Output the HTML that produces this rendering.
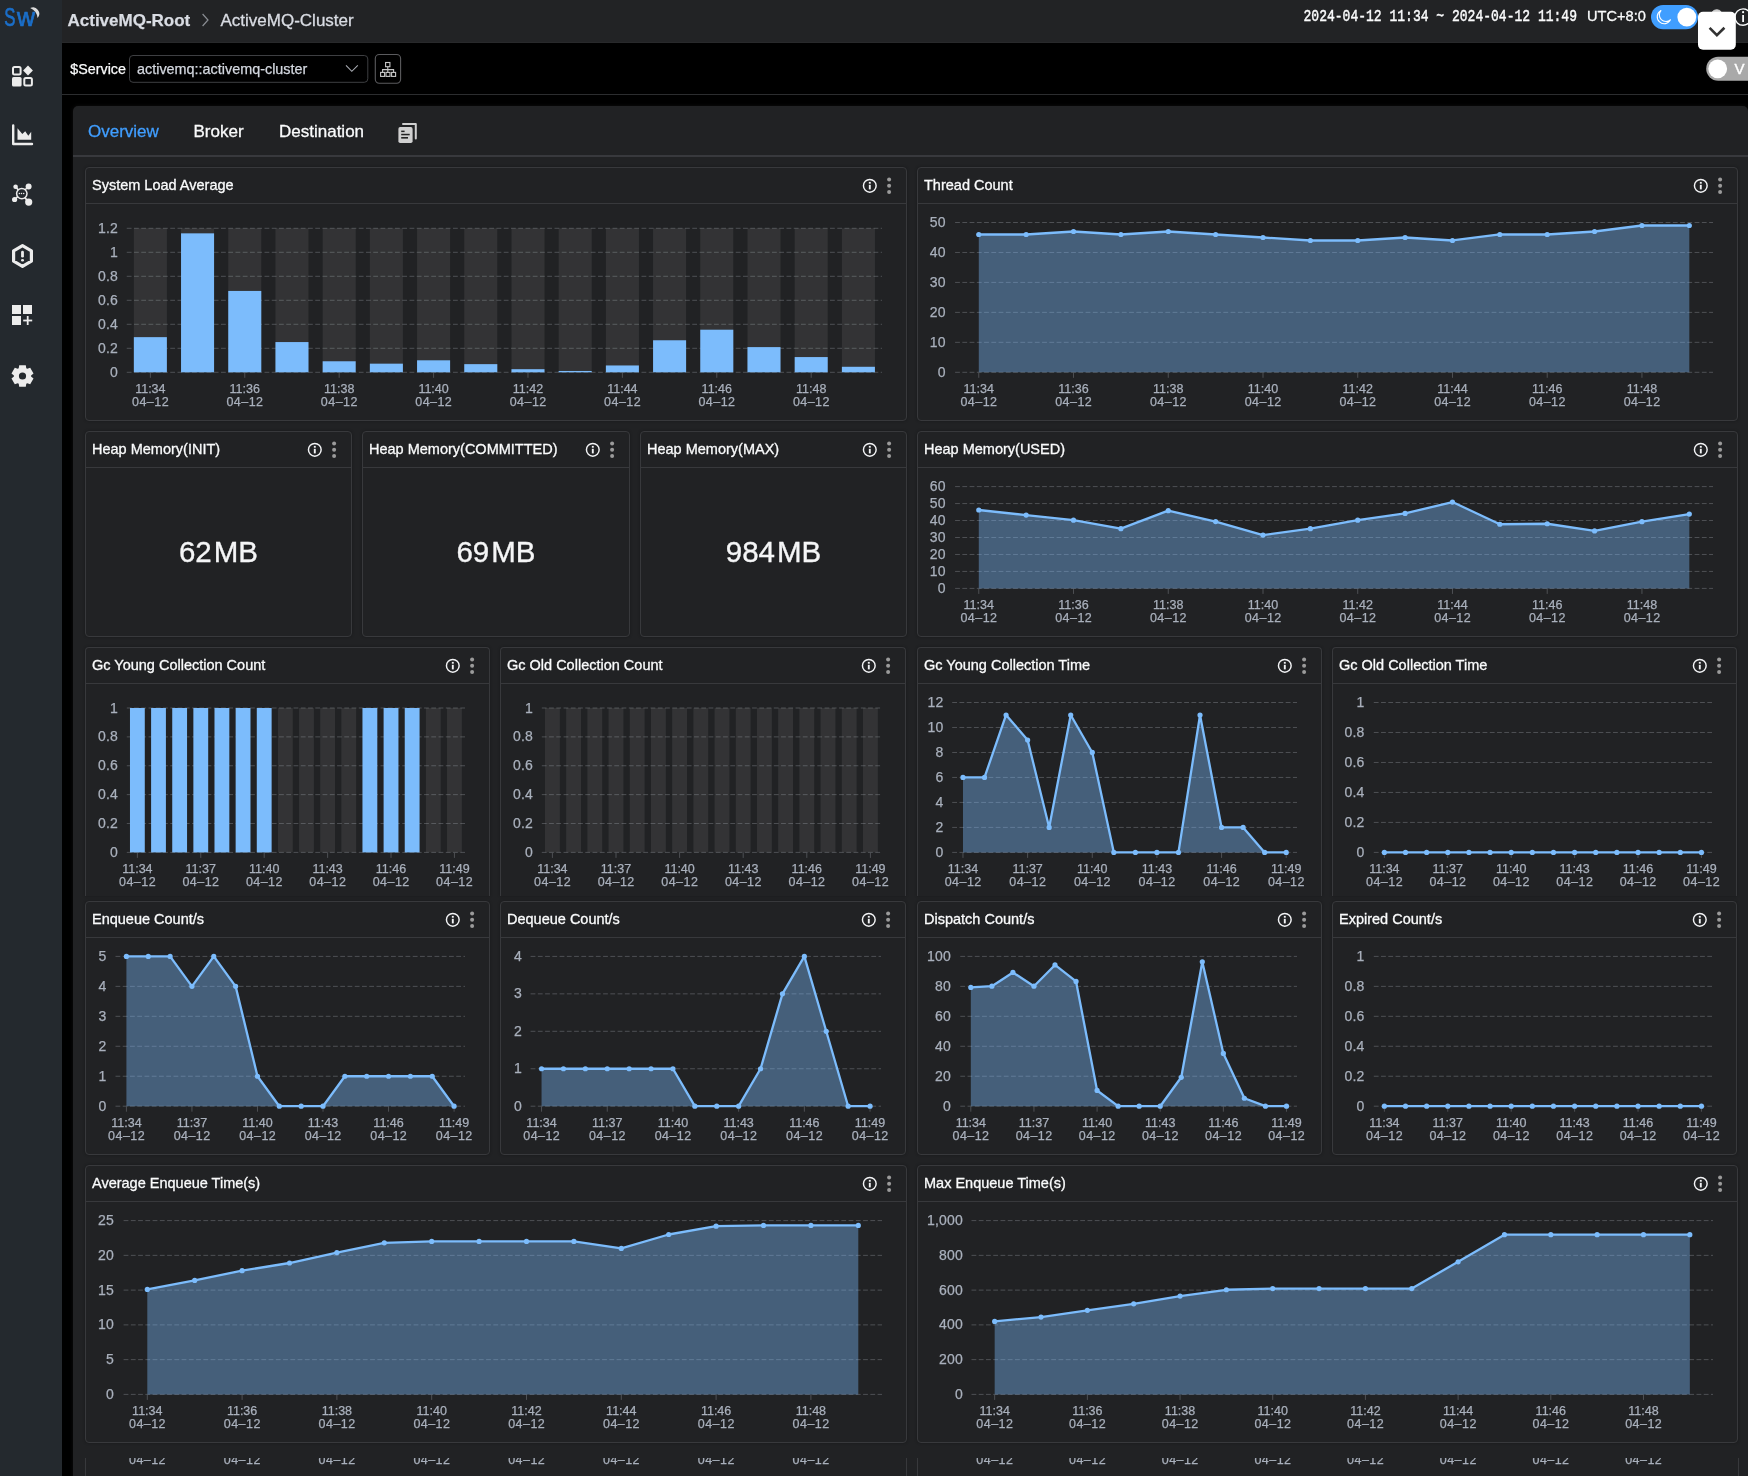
<!DOCTYPE html>
<html><head><meta charset="utf-8"><title>ActiveMQ-Cluster</title>
<style>
html,body{margin:0;padding:0;}
body{width:1748px;height:1476px;overflow:hidden;background:#000;position:relative;font-family:'Liberation Sans', sans-serif;}
.abs{position:absolute;}
.card{position:absolute;box-sizing:border-box;border:1px solid #38393c;border-radius:4px;background:#212224;box-shadow:0 0 3px rgba(0,0,0,0.3);}
.card.nb{border-bottom:none;border-bottom-left-radius:0;border-bottom-right-radius:0;}
.hd{position:absolute;left:0;right:0;top:35px;height:1px;background:#38393c;}
.tt{position:absolute;left:5.8px;top:9px;font-size:14.5px;color:#fafbfc;white-space:nowrap;line-height:17px;-webkit-text-stroke:0.3px #fafbfc;}
svg text{font-family:'Liberation Sans', sans-serif;}
svg.abs{will-change:transform;}
.card,.stat,.tt{will-change:transform;}
.yl{font-size:14px;fill:#a9b0bc;stroke:#a9b0bc;stroke-width:0.25px;letter-spacing:0.2px;}
.xl{font-size:12.5px;fill:#a9b0bc;stroke:#a9b0bc;stroke-width:0.25px;}
.xd{letter-spacing:0.45px;}
.stat{position:absolute;font-size:29.5px;color:#f5f6f7;-webkit-text-stroke:0.35px #f5f6f7;white-space:nowrap;line-height:30px;text-align:center;}
</style></head><body>

<div class="abs" style="left:0;top:0;width:62px;height:1476px;background:#24292e;"></div>
<div class="abs" style="left:62px;top:0;width:1686px;height:43px;background:#222325;"></div>
<div class="abs" style="left:62px;top:42px;width:1686px;height:1px;background:#28292b;"></div>
<div class="abs" style="left:62px;top:94px;width:1686px;height:1px;background:#2c2d2f;"></div>
<div class="abs" style="left:73px;top:106px;width:1675px;height:1400px;background:#212224;border-radius:5px;box-shadow:0 0 4px rgba(255,255,255,0.06);"></div>
<div class="abs" style="left:73px;top:155px;width:1675px;height:2px;background:#38393d;"></div>
<div class="card" style="left:85px;top:167px;width:822px;height:254px;"><div class="hd"></div><div class="tt">System Load Average</div></div>
<div class="card" style="left:917px;top:167px;width:821px;height:254px;"><div class="hd"></div><div class="tt">Thread Count</div></div>
<div class="card" style="left:85px;top:431px;width:267px;height:206px;"><div class="hd"></div><div class="tt">Heap Memory(INIT)</div></div>
<div class="card" style="left:362px;top:431px;width:268px;height:206px;"><div class="hd"></div><div class="tt">Heap Memory(COMMITTED)</div></div>
<div class="card" style="left:640px;top:431px;width:267px;height:206px;"><div class="hd"></div><div class="tt">Heap Memory(MAX)</div></div>
<div class="card" style="left:917px;top:431px;width:821px;height:206px;"><div class="hd"></div><div class="tt">Heap Memory(USED)</div></div>
<div class="card nb" style="left:85px;top:647px;width:405px;height:249px;"><div class="hd"></div><div class="tt">Gc Young Collection Count</div></div>
<div class="card nb" style="left:500px;top:647px;width:406px;height:249px;"><div class="hd"></div><div class="tt">Gc Old Collection Count</div></div>
<div class="card nb" style="left:917px;top:647px;width:405px;height:249px;"><div class="hd"></div><div class="tt">Gc Young Collection Time</div></div>
<div class="card nb" style="left:1332px;top:647px;width:405px;height:249px;"><div class="hd"></div><div class="tt">Gc Old Collection Time</div></div>
<div class="card" style="left:85px;top:901px;width:405px;height:254px;"><div class="hd"></div><div class="tt">Enqueue Count/s</div></div>
<div class="card" style="left:500px;top:901px;width:406px;height:254px;"><div class="hd"></div><div class="tt">Dequeue Count/s</div></div>
<div class="card" style="left:917px;top:901px;width:405px;height:254px;"><div class="hd"></div><div class="tt">Dispatch Count/s</div></div>
<div class="card" style="left:1332px;top:901px;width:405px;height:254px;"><div class="hd"></div><div class="tt">Expired Count/s</div></div>
<div class="card" style="left:85px;top:1165px;width:822px;height:278px;"><div class="hd"></div><div class="tt">Average Enqueue Time(s)</div></div>
<div class="card" style="left:917px;top:1165px;width:821px;height:278px;"><div class="hd"></div><div class="tt">Max Enqueue Time(s)</div></div>
<div class="stat" style="left:85px;width:267px;top:537px;">62<span style="margin-left:2px">MB</span></div>
<div class="stat" style="left:362px;width:268px;top:537px;">69<span style="margin-left:2px">MB</span></div>
<div class="stat" style="left:640px;width:267px;top:537px;">984<span style="margin-left:2px">MB</span></div>
<svg class="abs" style="left:0;top:0" width="1748" height="1476" viewBox="0 0 1748 1476">
<text x="4.3" y="25.6" font-size="25" fill="#1b6fca" stroke="#1b6fca" stroke-width="0.7" textLength="11.2" lengthAdjust="spacingAndGlyphs" style="font-family:'Liberation Sans',sans-serif">S</text>
<text x="17" y="25.6" font-size="25" fill="#1b6fca" stroke="#1b6fca" stroke-width="0.7" textLength="18" lengthAdjust="spacingAndGlyphs" style="font-family:'Liberation Sans',sans-serif">w</text>
<path d="M30.2,8.1 A6.2,6.2 0 0 1 37.5,17.9 A12,12 0 0 0 30.2,8.1 Z" fill="#dcdcdc"/>
<rect x="13" y="67" width="7.6" height="7.6" rx="1.5" fill="none" stroke="#ececec" stroke-width="2"/>
<path d="M28,65.6 L32.9,70.5 L28,75.4 L23.1,70.5 Z" fill="#ececec"/>
<rect x="12" y="77" width="9.6" height="9.6" rx="1.6" fill="#ececec"/>
<rect x="24.3" y="78" width="7.6" height="7.6" rx="1.5" fill="none" stroke="#ececec" stroke-width="2"/>
<path d="M13.2,125.5 L13.2,144 L32,144" fill="none" stroke="#ececec" stroke-width="2.4" stroke-linecap="round" stroke-linejoin="round"/>
<path d="M17.5,128.3 L22.3,134 L25.2,131.2 L28.3,135.8 L31.2,131.8 L31.2,139.8 L17.5,139.8 Z" fill="#ececec"/>
<g stroke="#ececec" stroke-width="1.7" fill="none"><line x1="15.6" y1="186.7" x2="28.7" y2="202.1"/><line x1="28.6" y1="186.5" x2="14.6" y2="199.5"/></g>
<circle cx="21.8" cy="193.6" r="5.2" fill="#24292e" stroke="#ececec" stroke-width="1.5"/>
<circle cx="15.6" cy="186.7" r="2.3" fill="#ececec"/><circle cx="28.6" cy="186.6" r="3" fill="#ececec"/><circle cx="14.6" cy="199.5" r="2.6" fill="#ececec"/><circle cx="28.7" cy="202.1" r="3.6" fill="#ececec"/>
<circle cx="19.4" cy="193.6" r="0.75" fill="#ececec"/><circle cx="21.5" cy="193.6" r="0.75" fill="#ececec"/><circle cx="23.7" cy="193.6" r="0.75" fill="#ececec"/>
<path d="M22.5,245.7 L31.4,250.85 L31.4,261.15 L22.5,266.3 L13.6,261.15 L13.6,250.85 Z" fill="none" stroke="#ececec" stroke-width="3.2" stroke-linejoin="round"/>
<rect x="21.1" y="250.8" width="2.8" height="6.8" rx="1.4" fill="#ececec"/><ellipse cx="22.5" cy="260.2" rx="1.5" ry="1.3" fill="#ececec"/>
<rect x="12" y="305" width="9" height="9" fill="#ececec"/><rect x="23" y="305" width="9" height="9" fill="#ececec"/><rect x="12" y="316" width="9" height="9" fill="#ececec"/>
<rect x="23.2" y="319.6" width="9" height="1.8" fill="#ececec"/><rect x="26.8" y="316" width="1.8" height="9" fill="#ececec"/>
<path d="M19.20,365.19 L25.80,365.19 L26.27,368.27 L27.31,368.87 L30.21,367.74 L33.51,373.46 L31.08,375.40 L31.08,376.60 L33.51,378.54 L30.21,384.26 L27.31,383.13 L26.27,383.73 L25.80,386.81 L19.20,386.81 L18.73,383.73 L17.69,383.13 L14.79,384.26 L11.49,378.54 L13.92,376.60 L13.92,375.40 L11.49,373.46 L14.79,367.74 L17.69,368.87 L18.73,368.27 Z M26.1,376 A3.6,3.6 0 1 0 18.9,376 A3.6,3.6 0 1 0 26.1,376 Z" fill="#ececec" fill-rule="evenodd"/>
<text x="67.5" y="26.3" font-size="17" font-weight="bold" fill="#d9dce3" stroke="#d9dce3" stroke-width="0.25">ActiveMQ-Root</text>
<path d="M202.6,14 L208,20 L202.6,26" fill="none" stroke="#8a8d93" stroke-width="1.2"/>
<text x="220.5" y="26.3" font-size="17" fill="#d9dce3" stroke="#d9dce3" stroke-width="0.3">ActiveMQ-Cluster</text>
<text x="1303.5" y="21.2" font-size="17" fill="#fafbfc" textLength="273.5" lengthAdjust="spacingAndGlyphs" stroke="#fafbfc" stroke-width="0.45" style="font-family:'Liberation Mono',monospace">2024-04-12 11:34 ~ 2024-04-12 11:49</text>
<text x="1587" y="21" font-size="14.6" fill="#fafbfc" stroke="#fafbfc" stroke-width="0.3">UTC+8:0</text>
<rect x="1651" y="5" width="47" height="24.2" rx="12.1" fill="#409eff"/>
<circle cx="1686.8" cy="17.1" r="9.4" fill="#fff"/>
<path d="M1661.2,10.4 A7,7 0 1 0 1670.6,19.6 A6.2,6.2 0 0 1 1661.2,10.4 Z" fill="none" stroke="#fff" stroke-width="1.1"/>
<circle cx="1743.1" cy="17.1" r="8.2" fill="none" stroke="#fafbfc" stroke-width="1.4"/>
<rect x="1742.2" y="15" width="1.8" height="7" fill="#fafbfc"/><circle cx="1743.1" cy="12.2" r="1.1" fill="#fafbfc"/>
<path d="M1712,12.5 A5,4 0 0 1 1721.5,12.5" fill="#cfcfcf" stroke="#cfcfcf" stroke-width="1"/>
<rect x="1698" y="11.8" width="37.8" height="38" rx="5" fill="#fff"/>
<path d="M1709.6,27.8 L1716.9,35.2 L1724.4,27.8" fill="none" stroke="#333" stroke-width="2.6"/>
<text x="70.3" y="74.2" font-size="14.3" fill="#fafbfc" stroke="#fafbfc" stroke-width="0.25">$Service</text>
<rect x="129.5" y="55.5" width="238.3" height="26.8" rx="3.5" fill="#000" stroke="#3e3f42" stroke-width="1"/>
<text x="137" y="74.2" font-size="14.4" fill="#d3d7df" stroke="#d3d7df" stroke-width="0.25">activemq::activemq-cluster</text>
<path d="M346,65.3 L351.8,71.3 L357.8,65.3" fill="none" stroke="#a8abb2" stroke-width="1.1"/>
<rect x="375.3" y="54.5" width="25.3" height="28.8" rx="4" fill="#000" stroke="#5b5b5e" stroke-width="1.1"/>
<g fill="none" stroke="#c9c9c9" stroke-width="1.1"><rect x="385.6" y="62.5" width="4.3" height="4.2"/><rect x="380.6" y="72.4" width="4" height="4"/><rect x="386" y="72.4" width="4" height="4"/><rect x="391.6" y="72.4" width="4" height="4"/><path d="M387.8,66.8 L387.8,72.4 M382.6,72.4 L382.6,69.6 L393.6,69.6 L393.6,72.4"/></g>
<rect x="1706.2" y="56.8" width="60" height="24" rx="12" fill="#a9a9a9"/>
<circle cx="1717.7" cy="68.8" r="9.4" fill="#fff"/>
<text x="1734.4" y="74.2" font-size="15" fill="#fff" stroke="#fff" stroke-width="0.4">V</text>
<text x="88" y="137.2" font-size="17" fill="#409eff" stroke="#409eff" stroke-width="0.3">Overview</text>
<text x="193.5" y="137.2" font-size="17" fill="#fafbfc" stroke="#fafbfc" stroke-width="0.3">Broker</text>
<text x="279" y="137.2" font-size="17" fill="#fafbfc" stroke="#fafbfc" stroke-width="0.3">Destination</text>
<path d="M403,124 L415.8,124 L415.8,138.5" fill="none" stroke="#d0d0d0" stroke-width="2" stroke-linejoin="round" stroke-linecap="round"/>
<rect x="398.4" y="127.1" width="14.2" height="15.9" rx="1.8" fill="#d0d0d0"/>
<g fill="#222"><rect x="401.2" y="130.6" width="3.4" height="1.5"/><rect x="401.2" y="133.8" width="8.5" height="1.5"/><rect x="401.2" y="137" width="6.8" height="1.6"/></g>
</svg>
<svg class="abs" style="left:0;top:0" width="1748" height="1476" viewBox="0 0 1748 1476">
<circle cx="869.8" cy="185.8" r="6.35" fill="none" stroke="#f2f3f5" stroke-width="1.45"/><rect x="868.8499999999999" y="181.9" width="1.9" height="1.8" fill="#f2f3f5"/><rect x="868.8499999999999" y="184.8" width="1.9" height="4.6" fill="#f2f3f5"/>
<circle cx="889.1" cy="179.5" r="2" fill="#9b9b9b"/><circle cx="889.1" cy="185.8" r="2" fill="#9b9b9b"/><circle cx="889.1" cy="192.10000000000002" r="2" fill="#9b9b9b"/>
<circle cx="1700.8" cy="185.8" r="6.35" fill="none" stroke="#f2f3f5" stroke-width="1.45"/><rect x="1699.85" y="181.9" width="1.9" height="1.8" fill="#f2f3f5"/><rect x="1699.85" y="184.8" width="1.9" height="4.6" fill="#f2f3f5"/>
<circle cx="1720.1" cy="179.5" r="2" fill="#9b9b9b"/><circle cx="1720.1" cy="185.8" r="2" fill="#9b9b9b"/><circle cx="1720.1" cy="192.10000000000002" r="2" fill="#9b9b9b"/>
<circle cx="314.8" cy="449.8" r="6.35" fill="none" stroke="#f2f3f5" stroke-width="1.45"/><rect x="313.85" y="445.90000000000003" width="1.9" height="1.8" fill="#f2f3f5"/><rect x="313.85" y="448.8" width="1.9" height="4.6" fill="#f2f3f5"/>
<circle cx="334.1" cy="443.5" r="2" fill="#9b9b9b"/><circle cx="334.1" cy="449.8" r="2" fill="#9b9b9b"/><circle cx="334.1" cy="456.1" r="2" fill="#9b9b9b"/>
<circle cx="592.8" cy="449.8" r="6.35" fill="none" stroke="#f2f3f5" stroke-width="1.45"/><rect x="591.8499999999999" y="445.90000000000003" width="1.9" height="1.8" fill="#f2f3f5"/><rect x="591.8499999999999" y="448.8" width="1.9" height="4.6" fill="#f2f3f5"/>
<circle cx="612.1" cy="443.5" r="2" fill="#9b9b9b"/><circle cx="612.1" cy="449.8" r="2" fill="#9b9b9b"/><circle cx="612.1" cy="456.1" r="2" fill="#9b9b9b"/>
<circle cx="869.8" cy="449.8" r="6.35" fill="none" stroke="#f2f3f5" stroke-width="1.45"/><rect x="868.8499999999999" y="445.90000000000003" width="1.9" height="1.8" fill="#f2f3f5"/><rect x="868.8499999999999" y="448.8" width="1.9" height="4.6" fill="#f2f3f5"/>
<circle cx="889.1" cy="443.5" r="2" fill="#9b9b9b"/><circle cx="889.1" cy="449.8" r="2" fill="#9b9b9b"/><circle cx="889.1" cy="456.1" r="2" fill="#9b9b9b"/>
<circle cx="1700.8" cy="449.8" r="6.35" fill="none" stroke="#f2f3f5" stroke-width="1.45"/><rect x="1699.85" y="445.90000000000003" width="1.9" height="1.8" fill="#f2f3f5"/><rect x="1699.85" y="448.8" width="1.9" height="4.6" fill="#f2f3f5"/>
<circle cx="1720.1" cy="443.5" r="2" fill="#9b9b9b"/><circle cx="1720.1" cy="449.8" r="2" fill="#9b9b9b"/><circle cx="1720.1" cy="456.1" r="2" fill="#9b9b9b"/>
<circle cx="452.8" cy="665.8" r="6.35" fill="none" stroke="#f2f3f5" stroke-width="1.45"/><rect x="451.85" y="661.9" width="1.9" height="1.8" fill="#f2f3f5"/><rect x="451.85" y="664.8" width="1.9" height="4.6" fill="#f2f3f5"/>
<circle cx="472.1" cy="659.5" r="2" fill="#9b9b9b"/><circle cx="472.1" cy="665.8" r="2" fill="#9b9b9b"/><circle cx="472.1" cy="672.0999999999999" r="2" fill="#9b9b9b"/>
<circle cx="868.8" cy="665.8" r="6.35" fill="none" stroke="#f2f3f5" stroke-width="1.45"/><rect x="867.8499999999999" y="661.9" width="1.9" height="1.8" fill="#f2f3f5"/><rect x="867.8499999999999" y="664.8" width="1.9" height="4.6" fill="#f2f3f5"/>
<circle cx="888.1" cy="659.5" r="2" fill="#9b9b9b"/><circle cx="888.1" cy="665.8" r="2" fill="#9b9b9b"/><circle cx="888.1" cy="672.0999999999999" r="2" fill="#9b9b9b"/>
<circle cx="1284.8" cy="665.8" r="6.35" fill="none" stroke="#f2f3f5" stroke-width="1.45"/><rect x="1283.85" y="661.9" width="1.9" height="1.8" fill="#f2f3f5"/><rect x="1283.85" y="664.8" width="1.9" height="4.6" fill="#f2f3f5"/>
<circle cx="1304.1" cy="659.5" r="2" fill="#9b9b9b"/><circle cx="1304.1" cy="665.8" r="2" fill="#9b9b9b"/><circle cx="1304.1" cy="672.0999999999999" r="2" fill="#9b9b9b"/>
<circle cx="1699.8" cy="665.8" r="6.35" fill="none" stroke="#f2f3f5" stroke-width="1.45"/><rect x="1698.85" y="661.9" width="1.9" height="1.8" fill="#f2f3f5"/><rect x="1698.85" y="664.8" width="1.9" height="4.6" fill="#f2f3f5"/>
<circle cx="1719.1" cy="659.5" r="2" fill="#9b9b9b"/><circle cx="1719.1" cy="665.8" r="2" fill="#9b9b9b"/><circle cx="1719.1" cy="672.0999999999999" r="2" fill="#9b9b9b"/>
<circle cx="452.8" cy="919.8" r="6.35" fill="none" stroke="#f2f3f5" stroke-width="1.45"/><rect x="451.85" y="915.9" width="1.9" height="1.8" fill="#f2f3f5"/><rect x="451.85" y="918.8" width="1.9" height="4.6" fill="#f2f3f5"/>
<circle cx="472.1" cy="913.5" r="2" fill="#9b9b9b"/><circle cx="472.1" cy="919.8" r="2" fill="#9b9b9b"/><circle cx="472.1" cy="926.0999999999999" r="2" fill="#9b9b9b"/>
<circle cx="868.8" cy="919.8" r="6.35" fill="none" stroke="#f2f3f5" stroke-width="1.45"/><rect x="867.8499999999999" y="915.9" width="1.9" height="1.8" fill="#f2f3f5"/><rect x="867.8499999999999" y="918.8" width="1.9" height="4.6" fill="#f2f3f5"/>
<circle cx="888.1" cy="913.5" r="2" fill="#9b9b9b"/><circle cx="888.1" cy="919.8" r="2" fill="#9b9b9b"/><circle cx="888.1" cy="926.0999999999999" r="2" fill="#9b9b9b"/>
<circle cx="1284.8" cy="919.8" r="6.35" fill="none" stroke="#f2f3f5" stroke-width="1.45"/><rect x="1283.85" y="915.9" width="1.9" height="1.8" fill="#f2f3f5"/><rect x="1283.85" y="918.8" width="1.9" height="4.6" fill="#f2f3f5"/>
<circle cx="1304.1" cy="913.5" r="2" fill="#9b9b9b"/><circle cx="1304.1" cy="919.8" r="2" fill="#9b9b9b"/><circle cx="1304.1" cy="926.0999999999999" r="2" fill="#9b9b9b"/>
<circle cx="1699.8" cy="919.8" r="6.35" fill="none" stroke="#f2f3f5" stroke-width="1.45"/><rect x="1698.85" y="915.9" width="1.9" height="1.8" fill="#f2f3f5"/><rect x="1698.85" y="918.8" width="1.9" height="4.6" fill="#f2f3f5"/>
<circle cx="1719.1" cy="913.5" r="2" fill="#9b9b9b"/><circle cx="1719.1" cy="919.8" r="2" fill="#9b9b9b"/><circle cx="1719.1" cy="926.0999999999999" r="2" fill="#9b9b9b"/>
<circle cx="869.8" cy="1183.8" r="6.35" fill="none" stroke="#f2f3f5" stroke-width="1.45"/><rect x="868.8499999999999" y="1179.8999999999999" width="1.9" height="1.8" fill="#f2f3f5"/><rect x="868.8499999999999" y="1182.8" width="1.9" height="4.6" fill="#f2f3f5"/>
<circle cx="889.1" cy="1177.5" r="2" fill="#9b9b9b"/><circle cx="889.1" cy="1183.8" r="2" fill="#9b9b9b"/><circle cx="889.1" cy="1190.1" r="2" fill="#9b9b9b"/>
<circle cx="1700.8" cy="1183.8" r="6.35" fill="none" stroke="#f2f3f5" stroke-width="1.45"/><rect x="1699.85" y="1179.8999999999999" width="1.9" height="1.8" fill="#f2f3f5"/><rect x="1699.85" y="1182.8" width="1.9" height="4.6" fill="#f2f3f5"/>
<circle cx="1720.1" cy="1177.5" r="2" fill="#9b9b9b"/><circle cx="1720.1" cy="1183.8" r="2" fill="#9b9b9b"/><circle cx="1720.1" cy="1190.1" r="2" fill="#9b9b9b"/>
<line x1="126.76" y1="372.3" x2="882" y2="372.3" stroke="#4e5054" stroke-width="1" stroke-dasharray="4.8 2.45"/>
<text x="118" y="376.9" text-anchor="end" class="yl">0</text>
<line x1="126.76" y1="348.3" x2="882" y2="348.3" stroke="#4e5054" stroke-width="1" stroke-dasharray="4.8 2.45"/>
<text x="118" y="352.9" text-anchor="end" class="yl">0.2</text>
<line x1="126.76" y1="324.3" x2="882" y2="324.3" stroke="#4e5054" stroke-width="1" stroke-dasharray="4.8 2.45"/>
<text x="118" y="328.9" text-anchor="end" class="yl">0.4</text>
<line x1="126.76" y1="300.3" x2="882" y2="300.3" stroke="#4e5054" stroke-width="1" stroke-dasharray="4.8 2.45"/>
<text x="118" y="304.9" text-anchor="end" class="yl">0.6</text>
<line x1="126.76" y1="276.3" x2="882" y2="276.3" stroke="#4e5054" stroke-width="1" stroke-dasharray="4.8 2.45"/>
<text x="118" y="280.9" text-anchor="end" class="yl">0.8</text>
<line x1="126.76" y1="252.3" x2="882" y2="252.3" stroke="#4e5054" stroke-width="1" stroke-dasharray="4.8 2.45"/>
<text x="118" y="256.9" text-anchor="end" class="yl">1</text>
<line x1="126.76" y1="228.3" x2="882" y2="228.3" stroke="#4e5054" stroke-width="1" stroke-dasharray="4.8 2.45"/>
<text x="118" y="232.9" text-anchor="end" class="yl">1.2</text>
<line x1="150.36" y1="372.3" x2="150.36" y2="377.8" stroke="#4e5054" stroke-width="1"/>
<text x="150.36" y="392.8" text-anchor="middle" class="xl">11:34</text>
<text x="150.56" y="406" text-anchor="middle" class="xl xd">04–12</text>
<line x1="244.77" y1="372.3" x2="244.77" y2="377.8" stroke="#4e5054" stroke-width="1"/>
<text x="244.77" y="392.8" text-anchor="middle" class="xl">11:36</text>
<text x="244.97" y="406" text-anchor="middle" class="xl xd">04–12</text>
<line x1="339.17" y1="372.3" x2="339.17" y2="377.8" stroke="#4e5054" stroke-width="1"/>
<text x="339.17" y="392.8" text-anchor="middle" class="xl">11:38</text>
<text x="339.37" y="406" text-anchor="middle" class="xl xd">04–12</text>
<line x1="433.58" y1="372.3" x2="433.58" y2="377.8" stroke="#4e5054" stroke-width="1"/>
<text x="433.58" y="392.8" text-anchor="middle" class="xl">11:40</text>
<text x="433.78" y="406" text-anchor="middle" class="xl xd">04–12</text>
<line x1="527.98" y1="372.3" x2="527.98" y2="377.8" stroke="#4e5054" stroke-width="1"/>
<text x="527.98" y="392.8" text-anchor="middle" class="xl">11:42</text>
<text x="528.18" y="406" text-anchor="middle" class="xl xd">04–12</text>
<line x1="622.39" y1="372.3" x2="622.39" y2="377.8" stroke="#4e5054" stroke-width="1"/>
<text x="622.39" y="392.8" text-anchor="middle" class="xl">11:44</text>
<text x="622.59" y="406" text-anchor="middle" class="xl xd">04–12</text>
<line x1="716.79" y1="372.3" x2="716.79" y2="377.8" stroke="#4e5054" stroke-width="1"/>
<text x="716.79" y="392.8" text-anchor="middle" class="xl">11:46</text>
<text x="716.99" y="406" text-anchor="middle" class="xl xd">04–12</text>
<line x1="811.2" y1="372.3" x2="811.2" y2="377.8" stroke="#4e5054" stroke-width="1"/>
<text x="811.2" y="392.8" text-anchor="middle" class="xl">11:48</text>
<text x="811.4" y="406" text-anchor="middle" class="xl xd">04–12</text>
<rect x="133.84" y="228.3" width="33.04" height="144" fill="rgba(180,180,180,0.12)"/>
<rect x="181.04" y="228.3" width="33.04" height="144" fill="rgba(180,180,180,0.12)"/>
<rect x="228.25" y="228.3" width="33.04" height="144" fill="rgba(180,180,180,0.12)"/>
<rect x="275.45" y="228.3" width="33.04" height="144" fill="rgba(180,180,180,0.12)"/>
<rect x="322.65" y="228.3" width="33.04" height="144" fill="rgba(180,180,180,0.12)"/>
<rect x="369.85" y="228.3" width="33.04" height="144" fill="rgba(180,180,180,0.12)"/>
<rect x="417.06" y="228.3" width="33.04" height="144" fill="rgba(180,180,180,0.12)"/>
<rect x="464.26" y="228.3" width="33.04" height="144" fill="rgba(180,180,180,0.12)"/>
<rect x="511.46" y="228.3" width="33.04" height="144" fill="rgba(180,180,180,0.12)"/>
<rect x="558.66" y="228.3" width="33.04" height="144" fill="rgba(180,180,180,0.12)"/>
<rect x="605.87" y="228.3" width="33.04" height="144" fill="rgba(180,180,180,0.12)"/>
<rect x="653.07" y="228.3" width="33.04" height="144" fill="rgba(180,180,180,0.12)"/>
<rect x="700.27" y="228.3" width="33.04" height="144" fill="rgba(180,180,180,0.12)"/>
<rect x="747.47" y="228.3" width="33.04" height="144" fill="rgba(180,180,180,0.12)"/>
<rect x="794.68" y="228.3" width="33.04" height="144" fill="rgba(180,180,180,0.12)"/>
<rect x="841.88" y="228.3" width="33.04" height="144" fill="rgba(180,180,180,0.12)"/>
<rect x="133.84" y="337.14" width="33.04" height="35.16" fill="#7cbcfc"/>
<rect x="181.04" y="233.34" width="33.04" height="138.96" fill="#7cbcfc"/>
<rect x="228.25" y="290.94" width="33.04" height="81.36" fill="#7cbcfc"/>
<rect x="275.45" y="342.06" width="33.04" height="30.24" fill="#7cbcfc"/>
<rect x="322.65" y="361.26" width="33.04" height="11.04" fill="#7cbcfc"/>
<rect x="369.85" y="363.66" width="33.04" height="8.64" fill="#7cbcfc"/>
<rect x="417.06" y="360.3" width="33.04" height="12" fill="#7cbcfc"/>
<rect x="464.26" y="364.14" width="33.04" height="8.16" fill="#7cbcfc"/>
<rect x="511.46" y="369.18" width="33.04" height="3.12" fill="#7cbcfc"/>
<rect x="558.66" y="370.98" width="33.04" height="1.32" fill="#7cbcfc"/>
<rect x="605.87" y="365.46" width="33.04" height="6.84" fill="#7cbcfc"/>
<rect x="653.07" y="340.26" width="33.04" height="32.04" fill="#7cbcfc"/>
<rect x="700.27" y="329.7" width="33.04" height="42.6" fill="#7cbcfc"/>
<rect x="747.47" y="347.1" width="33.04" height="25.2" fill="#7cbcfc"/>
<rect x="794.68" y="357.06" width="33.04" height="15.24" fill="#7cbcfc"/>
<rect x="841.88" y="366.78" width="33.04" height="5.52" fill="#7cbcfc"/>
<line x1="955.1" y1="372.3" x2="1713" y2="372.3" stroke="#4e5054" stroke-width="1" stroke-dasharray="4.8 2.45"/>
<text x="945.7" y="376.9" text-anchor="end" class="yl">0</text>
<line x1="955.1" y1="342.34" x2="1713" y2="342.34" stroke="#4e5054" stroke-width="1" stroke-dasharray="4.8 2.45"/>
<text x="945.7" y="346.94" text-anchor="end" class="yl">10</text>
<line x1="955.1" y1="312.38" x2="1713" y2="312.38" stroke="#4e5054" stroke-width="1" stroke-dasharray="4.8 2.45"/>
<text x="945.7" y="316.98" text-anchor="end" class="yl">20</text>
<line x1="955.1" y1="282.42" x2="1713" y2="282.42" stroke="#4e5054" stroke-width="1" stroke-dasharray="4.8 2.45"/>
<text x="945.7" y="287.02" text-anchor="end" class="yl">30</text>
<line x1="955.1" y1="252.46" x2="1713" y2="252.46" stroke="#4e5054" stroke-width="1" stroke-dasharray="4.8 2.45"/>
<text x="945.7" y="257.06" text-anchor="end" class="yl">40</text>
<line x1="955.1" y1="222.5" x2="1713" y2="222.5" stroke="#4e5054" stroke-width="1" stroke-dasharray="4.8 2.45"/>
<text x="945.7" y="227.1" text-anchor="end" class="yl">50</text>
<line x1="978.78" y1="372.3" x2="978.78" y2="377.8" stroke="#4e5054" stroke-width="1"/>
<text x="978.78" y="392.8" text-anchor="middle" class="xl">11:34</text>
<text x="978.98" y="406" text-anchor="middle" class="xl xd">04–12</text>
<line x1="1073.52" y1="372.3" x2="1073.52" y2="377.8" stroke="#4e5054" stroke-width="1"/>
<text x="1073.52" y="392.8" text-anchor="middle" class="xl">11:36</text>
<text x="1073.72" y="406" text-anchor="middle" class="xl xd">04–12</text>
<line x1="1168.26" y1="372.3" x2="1168.26" y2="377.8" stroke="#4e5054" stroke-width="1"/>
<text x="1168.26" y="392.8" text-anchor="middle" class="xl">11:38</text>
<text x="1168.46" y="406" text-anchor="middle" class="xl xd">04–12</text>
<line x1="1263" y1="372.3" x2="1263" y2="377.8" stroke="#4e5054" stroke-width="1"/>
<text x="1263" y="392.8" text-anchor="middle" class="xl">11:40</text>
<text x="1263.2" y="406" text-anchor="middle" class="xl xd">04–12</text>
<line x1="1357.73" y1="372.3" x2="1357.73" y2="377.8" stroke="#4e5054" stroke-width="1"/>
<text x="1357.73" y="392.8" text-anchor="middle" class="xl">11:42</text>
<text x="1357.93" y="406" text-anchor="middle" class="xl xd">04–12</text>
<line x1="1452.47" y1="372.3" x2="1452.47" y2="377.8" stroke="#4e5054" stroke-width="1"/>
<text x="1452.47" y="392.8" text-anchor="middle" class="xl">11:44</text>
<text x="1452.67" y="406" text-anchor="middle" class="xl xd">04–12</text>
<line x1="1547.21" y1="372.3" x2="1547.21" y2="377.8" stroke="#4e5054" stroke-width="1"/>
<text x="1547.21" y="392.8" text-anchor="middle" class="xl">11:46</text>
<text x="1547.41" y="406" text-anchor="middle" class="xl xd">04–12</text>
<line x1="1641.95" y1="372.3" x2="1641.95" y2="377.8" stroke="#4e5054" stroke-width="1"/>
<text x="1641.95" y="392.8" text-anchor="middle" class="xl">11:48</text>
<text x="1642.15" y="406" text-anchor="middle" class="xl xd">04–12</text>
<polygon points="978.78,372.3 978.78,234.48 1026.15,234.48 1073.52,231.49 1120.89,234.48 1168.26,231.49 1215.63,234.48 1263,237.48 1310.37,240.48 1357.73,240.48 1405.1,237.48 1452.47,240.48 1499.84,234.48 1547.21,234.48 1594.58,231.49 1641.95,225.5 1689.32,225.5 1689.32,372.3" fill="rgba(124,188,252,0.40)"/>
<polyline points="978.78,234.48 1026.15,234.48 1073.52,231.49 1120.89,234.48 1168.26,231.49 1215.63,234.48 1263,237.48 1310.37,240.48 1357.73,240.48 1405.1,237.48 1452.47,240.48 1499.84,234.48 1547.21,234.48 1594.58,231.49 1641.95,225.5 1689.32,225.5" fill="none" stroke="#7cbcfc" stroke-width="2.3" stroke-linejoin="round"/>
<circle cx="978.78" cy="234.48" r="2.6" fill="#7cbcfc"/>
<circle cx="1026.15" cy="234.48" r="2.6" fill="#7cbcfc"/>
<circle cx="1073.52" cy="231.49" r="2.6" fill="#7cbcfc"/>
<circle cx="1120.89" cy="234.48" r="2.6" fill="#7cbcfc"/>
<circle cx="1168.26" cy="231.49" r="2.6" fill="#7cbcfc"/>
<circle cx="1215.63" cy="234.48" r="2.6" fill="#7cbcfc"/>
<circle cx="1263" cy="237.48" r="2.6" fill="#7cbcfc"/>
<circle cx="1310.37" cy="240.48" r="2.6" fill="#7cbcfc"/>
<circle cx="1357.73" cy="240.48" r="2.6" fill="#7cbcfc"/>
<circle cx="1405.1" cy="237.48" r="2.6" fill="#7cbcfc"/>
<circle cx="1452.47" cy="240.48" r="2.6" fill="#7cbcfc"/>
<circle cx="1499.84" cy="234.48" r="2.6" fill="#7cbcfc"/>
<circle cx="1547.21" cy="234.48" r="2.6" fill="#7cbcfc"/>
<circle cx="1594.58" cy="231.49" r="2.6" fill="#7cbcfc"/>
<circle cx="1641.95" cy="225.5" r="2.6" fill="#7cbcfc"/>
<circle cx="1689.32" cy="225.5" r="2.6" fill="#7cbcfc"/>
<line x1="955.1" y1="588.4" x2="1713" y2="588.4" stroke="#4e5054" stroke-width="1" stroke-dasharray="4.8 2.45"/>
<text x="945.7" y="593" text-anchor="end" class="yl">0</text>
<line x1="955.1" y1="571.43" x2="1713" y2="571.43" stroke="#4e5054" stroke-width="1" stroke-dasharray="4.8 2.45"/>
<text x="945.7" y="576.03" text-anchor="end" class="yl">10</text>
<line x1="955.1" y1="554.47" x2="1713" y2="554.47" stroke="#4e5054" stroke-width="1" stroke-dasharray="4.8 2.45"/>
<text x="945.7" y="559.07" text-anchor="end" class="yl">20</text>
<line x1="955.1" y1="537.5" x2="1713" y2="537.5" stroke="#4e5054" stroke-width="1" stroke-dasharray="4.8 2.45"/>
<text x="945.7" y="542.1" text-anchor="end" class="yl">30</text>
<line x1="955.1" y1="520.53" x2="1713" y2="520.53" stroke="#4e5054" stroke-width="1" stroke-dasharray="4.8 2.45"/>
<text x="945.7" y="525.13" text-anchor="end" class="yl">40</text>
<line x1="955.1" y1="503.57" x2="1713" y2="503.57" stroke="#4e5054" stroke-width="1" stroke-dasharray="4.8 2.45"/>
<text x="945.7" y="508.17" text-anchor="end" class="yl">50</text>
<line x1="955.1" y1="486.6" x2="1713" y2="486.6" stroke="#4e5054" stroke-width="1" stroke-dasharray="4.8 2.45"/>
<text x="945.7" y="491.2" text-anchor="end" class="yl">60</text>
<line x1="978.78" y1="588.4" x2="978.78" y2="593.9" stroke="#4e5054" stroke-width="1"/>
<text x="978.78" y="608.9" text-anchor="middle" class="xl">11:34</text>
<text x="978.98" y="622.1" text-anchor="middle" class="xl xd">04–12</text>
<line x1="1073.52" y1="588.4" x2="1073.52" y2="593.9" stroke="#4e5054" stroke-width="1"/>
<text x="1073.52" y="608.9" text-anchor="middle" class="xl">11:36</text>
<text x="1073.72" y="622.1" text-anchor="middle" class="xl xd">04–12</text>
<line x1="1168.26" y1="588.4" x2="1168.26" y2="593.9" stroke="#4e5054" stroke-width="1"/>
<text x="1168.26" y="608.9" text-anchor="middle" class="xl">11:38</text>
<text x="1168.46" y="622.1" text-anchor="middle" class="xl xd">04–12</text>
<line x1="1263" y1="588.4" x2="1263" y2="593.9" stroke="#4e5054" stroke-width="1"/>
<text x="1263" y="608.9" text-anchor="middle" class="xl">11:40</text>
<text x="1263.2" y="622.1" text-anchor="middle" class="xl xd">04–12</text>
<line x1="1357.73" y1="588.4" x2="1357.73" y2="593.9" stroke="#4e5054" stroke-width="1"/>
<text x="1357.73" y="608.9" text-anchor="middle" class="xl">11:42</text>
<text x="1357.93" y="622.1" text-anchor="middle" class="xl xd">04–12</text>
<line x1="1452.47" y1="588.4" x2="1452.47" y2="593.9" stroke="#4e5054" stroke-width="1"/>
<text x="1452.47" y="608.9" text-anchor="middle" class="xl">11:44</text>
<text x="1452.67" y="622.1" text-anchor="middle" class="xl xd">04–12</text>
<line x1="1547.21" y1="588.4" x2="1547.21" y2="593.9" stroke="#4e5054" stroke-width="1"/>
<text x="1547.21" y="608.9" text-anchor="middle" class="xl">11:46</text>
<text x="1547.41" y="622.1" text-anchor="middle" class="xl xd">04–12</text>
<line x1="1641.95" y1="588.4" x2="1641.95" y2="593.9" stroke="#4e5054" stroke-width="1"/>
<text x="1641.95" y="608.9" text-anchor="middle" class="xl">11:48</text>
<text x="1642.15" y="622.1" text-anchor="middle" class="xl xd">04–12</text>
<polygon points="978.78,588.4 978.78,510.01 1026.15,515.1 1073.52,520.19 1120.89,528.68 1168.26,510.69 1215.63,521.55 1263,535.12 1310.37,528.68 1357.73,520.19 1405.1,513.41 1452.47,502.04 1499.84,524.27 1547.21,523.76 1594.58,530.88 1641.95,521.72 1689.32,514.09 1689.32,588.4" fill="rgba(124,188,252,0.40)"/>
<polyline points="978.78,510.01 1026.15,515.1 1073.52,520.19 1120.89,528.68 1168.26,510.69 1215.63,521.55 1263,535.12 1310.37,528.68 1357.73,520.19 1405.1,513.41 1452.47,502.04 1499.84,524.27 1547.21,523.76 1594.58,530.88 1641.95,521.72 1689.32,514.09" fill="none" stroke="#7cbcfc" stroke-width="2.3" stroke-linejoin="round"/>
<circle cx="978.78" cy="510.01" r="2.6" fill="#7cbcfc"/>
<circle cx="1026.15" cy="515.1" r="2.6" fill="#7cbcfc"/>
<circle cx="1073.52" cy="520.19" r="2.6" fill="#7cbcfc"/>
<circle cx="1120.89" cy="528.68" r="2.6" fill="#7cbcfc"/>
<circle cx="1168.26" cy="510.69" r="2.6" fill="#7cbcfc"/>
<circle cx="1215.63" cy="521.55" r="2.6" fill="#7cbcfc"/>
<circle cx="1263" cy="535.12" r="2.6" fill="#7cbcfc"/>
<circle cx="1310.37" cy="528.68" r="2.6" fill="#7cbcfc"/>
<circle cx="1357.73" cy="520.19" r="2.6" fill="#7cbcfc"/>
<circle cx="1405.1" cy="513.41" r="2.6" fill="#7cbcfc"/>
<circle cx="1452.47" cy="502.04" r="2.6" fill="#7cbcfc"/>
<circle cx="1499.84" cy="524.27" r="2.6" fill="#7cbcfc"/>
<circle cx="1547.21" cy="523.76" r="2.6" fill="#7cbcfc"/>
<circle cx="1594.58" cy="530.88" r="2.6" fill="#7cbcfc"/>
<circle cx="1641.95" cy="521.72" r="2.6" fill="#7cbcfc"/>
<circle cx="1689.32" cy="514.09" r="2.6" fill="#7cbcfc"/>
<line x1="126.8" y1="852.4" x2="465" y2="852.4" stroke="#4e5054" stroke-width="1" stroke-dasharray="4.8 2.45"/>
<text x="118" y="857" text-anchor="end" class="yl">0</text>
<line x1="126.8" y1="823.52" x2="465" y2="823.52" stroke="#4e5054" stroke-width="1" stroke-dasharray="4.8 2.45"/>
<text x="118" y="828.12" text-anchor="end" class="yl">0.2</text>
<line x1="126.8" y1="794.64" x2="465" y2="794.64" stroke="#4e5054" stroke-width="1" stroke-dasharray="4.8 2.45"/>
<text x="118" y="799.24" text-anchor="end" class="yl">0.4</text>
<line x1="126.8" y1="765.76" x2="465" y2="765.76" stroke="#4e5054" stroke-width="1" stroke-dasharray="4.8 2.45"/>
<text x="118" y="770.36" text-anchor="end" class="yl">0.6</text>
<line x1="126.8" y1="736.88" x2="465" y2="736.88" stroke="#4e5054" stroke-width="1" stroke-dasharray="4.8 2.45"/>
<text x="118" y="741.48" text-anchor="end" class="yl">0.8</text>
<line x1="126.8" y1="708" x2="465" y2="708" stroke="#4e5054" stroke-width="1" stroke-dasharray="4.8 2.45"/>
<text x="118" y="712.6" text-anchor="end" class="yl">1</text>
<line x1="137.37" y1="852.4" x2="137.37" y2="857.9" stroke="#4e5054" stroke-width="1"/>
<text x="137.37" y="872.9" text-anchor="middle" class="xl">11:34</text>
<text x="137.57" y="886.1" text-anchor="middle" class="xl xd">04–12</text>
<line x1="200.78" y1="852.4" x2="200.78" y2="857.9" stroke="#4e5054" stroke-width="1"/>
<text x="200.78" y="872.9" text-anchor="middle" class="xl">11:37</text>
<text x="200.98" y="886.1" text-anchor="middle" class="xl xd">04–12</text>
<line x1="264.19" y1="852.4" x2="264.19" y2="857.9" stroke="#4e5054" stroke-width="1"/>
<text x="264.19" y="872.9" text-anchor="middle" class="xl">11:40</text>
<text x="264.39" y="886.1" text-anchor="middle" class="xl xd">04–12</text>
<line x1="327.61" y1="852.4" x2="327.61" y2="857.9" stroke="#4e5054" stroke-width="1"/>
<text x="327.61" y="872.9" text-anchor="middle" class="xl">11:43</text>
<text x="327.81" y="886.1" text-anchor="middle" class="xl xd">04–12</text>
<line x1="391.02" y1="852.4" x2="391.02" y2="857.9" stroke="#4e5054" stroke-width="1"/>
<text x="391.02" y="872.9" text-anchor="middle" class="xl">11:46</text>
<text x="391.22" y="886.1" text-anchor="middle" class="xl xd">04–12</text>
<line x1="454.43" y1="852.4" x2="454.43" y2="857.9" stroke="#4e5054" stroke-width="1"/>
<text x="454.43" y="872.9" text-anchor="middle" class="xl">11:49</text>
<text x="454.63" y="886.1" text-anchor="middle" class="xl xd">04–12</text>
<rect x="129.97" y="708" width="14.8" height="144.4" fill="rgba(180,180,180,0.12)"/>
<rect x="151.11" y="708" width="14.8" height="144.4" fill="rgba(180,180,180,0.12)"/>
<rect x="172.25" y="708" width="14.8" height="144.4" fill="rgba(180,180,180,0.12)"/>
<rect x="193.38" y="708" width="14.8" height="144.4" fill="rgba(180,180,180,0.12)"/>
<rect x="214.52" y="708" width="14.8" height="144.4" fill="rgba(180,180,180,0.12)"/>
<rect x="235.66" y="708" width="14.8" height="144.4" fill="rgba(180,180,180,0.12)"/>
<rect x="256.8" y="708" width="14.8" height="144.4" fill="rgba(180,180,180,0.12)"/>
<rect x="277.93" y="708" width="14.8" height="144.4" fill="rgba(180,180,180,0.12)"/>
<rect x="299.07" y="708" width="14.8" height="144.4" fill="rgba(180,180,180,0.12)"/>
<rect x="320.21" y="708" width="14.8" height="144.4" fill="rgba(180,180,180,0.12)"/>
<rect x="341.35" y="708" width="14.8" height="144.4" fill="rgba(180,180,180,0.12)"/>
<rect x="362.48" y="708" width="14.8" height="144.4" fill="rgba(180,180,180,0.12)"/>
<rect x="383.62" y="708" width="14.8" height="144.4" fill="rgba(180,180,180,0.12)"/>
<rect x="404.76" y="708" width="14.8" height="144.4" fill="rgba(180,180,180,0.12)"/>
<rect x="425.9" y="708" width="14.8" height="144.4" fill="rgba(180,180,180,0.12)"/>
<rect x="447.03" y="708" width="14.8" height="144.4" fill="rgba(180,180,180,0.12)"/>
<rect x="129.97" y="708" width="14.8" height="144.4" fill="#7cbcfc"/>
<rect x="151.11" y="708" width="14.8" height="144.4" fill="#7cbcfc"/>
<rect x="172.25" y="708" width="14.8" height="144.4" fill="#7cbcfc"/>
<rect x="193.38" y="708" width="14.8" height="144.4" fill="#7cbcfc"/>
<rect x="214.52" y="708" width="14.8" height="144.4" fill="#7cbcfc"/>
<rect x="235.66" y="708" width="14.8" height="144.4" fill="#7cbcfc"/>
<rect x="256.8" y="708" width="14.8" height="144.4" fill="#7cbcfc"/>
<rect x="362.48" y="708" width="14.8" height="144.4" fill="#7cbcfc"/>
<rect x="383.62" y="708" width="14.8" height="144.4" fill="#7cbcfc"/>
<rect x="404.76" y="708" width="14.8" height="144.4" fill="#7cbcfc"/>
<line x1="541.8" y1="852.4" x2="881" y2="852.4" stroke="#4e5054" stroke-width="1" stroke-dasharray="4.8 2.45"/>
<text x="533" y="857" text-anchor="end" class="yl">0</text>
<line x1="541.8" y1="823.52" x2="881" y2="823.52" stroke="#4e5054" stroke-width="1" stroke-dasharray="4.8 2.45"/>
<text x="533" y="828.12" text-anchor="end" class="yl">0.2</text>
<line x1="541.8" y1="794.64" x2="881" y2="794.64" stroke="#4e5054" stroke-width="1" stroke-dasharray="4.8 2.45"/>
<text x="533" y="799.24" text-anchor="end" class="yl">0.4</text>
<line x1="541.8" y1="765.76" x2="881" y2="765.76" stroke="#4e5054" stroke-width="1" stroke-dasharray="4.8 2.45"/>
<text x="533" y="770.36" text-anchor="end" class="yl">0.6</text>
<line x1="541.8" y1="736.88" x2="881" y2="736.88" stroke="#4e5054" stroke-width="1" stroke-dasharray="4.8 2.45"/>
<text x="533" y="741.48" text-anchor="end" class="yl">0.8</text>
<line x1="541.8" y1="708" x2="881" y2="708" stroke="#4e5054" stroke-width="1" stroke-dasharray="4.8 2.45"/>
<text x="533" y="712.6" text-anchor="end" class="yl">1</text>
<line x1="552.4" y1="852.4" x2="552.4" y2="857.9" stroke="#4e5054" stroke-width="1"/>
<text x="552.4" y="872.9" text-anchor="middle" class="xl">11:34</text>
<text x="552.6" y="886.1" text-anchor="middle" class="xl xd">04–12</text>
<line x1="616" y1="852.4" x2="616" y2="857.9" stroke="#4e5054" stroke-width="1"/>
<text x="616" y="872.9" text-anchor="middle" class="xl">11:37</text>
<text x="616.2" y="886.1" text-anchor="middle" class="xl xd">04–12</text>
<line x1="679.6" y1="852.4" x2="679.6" y2="857.9" stroke="#4e5054" stroke-width="1"/>
<text x="679.6" y="872.9" text-anchor="middle" class="xl">11:40</text>
<text x="679.8" y="886.1" text-anchor="middle" class="xl xd">04–12</text>
<line x1="743.2" y1="852.4" x2="743.2" y2="857.9" stroke="#4e5054" stroke-width="1"/>
<text x="743.2" y="872.9" text-anchor="middle" class="xl">11:43</text>
<text x="743.4" y="886.1" text-anchor="middle" class="xl xd">04–12</text>
<line x1="806.8" y1="852.4" x2="806.8" y2="857.9" stroke="#4e5054" stroke-width="1"/>
<text x="806.8" y="872.9" text-anchor="middle" class="xl">11:46</text>
<text x="807" y="886.1" text-anchor="middle" class="xl xd">04–12</text>
<line x1="870.4" y1="852.4" x2="870.4" y2="857.9" stroke="#4e5054" stroke-width="1"/>
<text x="870.4" y="872.9" text-anchor="middle" class="xl">11:49</text>
<text x="870.6" y="886.1" text-anchor="middle" class="xl xd">04–12</text>
<rect x="544.98" y="708" width="14.84" height="144.4" fill="rgba(180,180,180,0.12)"/>
<rect x="566.18" y="708" width="14.84" height="144.4" fill="rgba(180,180,180,0.12)"/>
<rect x="587.38" y="708" width="14.84" height="144.4" fill="rgba(180,180,180,0.12)"/>
<rect x="608.58" y="708" width="14.84" height="144.4" fill="rgba(180,180,180,0.12)"/>
<rect x="629.78" y="708" width="14.84" height="144.4" fill="rgba(180,180,180,0.12)"/>
<rect x="650.98" y="708" width="14.84" height="144.4" fill="rgba(180,180,180,0.12)"/>
<rect x="672.18" y="708" width="14.84" height="144.4" fill="rgba(180,180,180,0.12)"/>
<rect x="693.38" y="708" width="14.84" height="144.4" fill="rgba(180,180,180,0.12)"/>
<rect x="714.58" y="708" width="14.84" height="144.4" fill="rgba(180,180,180,0.12)"/>
<rect x="735.78" y="708" width="14.84" height="144.4" fill="rgba(180,180,180,0.12)"/>
<rect x="756.98" y="708" width="14.84" height="144.4" fill="rgba(180,180,180,0.12)"/>
<rect x="778.18" y="708" width="14.84" height="144.4" fill="rgba(180,180,180,0.12)"/>
<rect x="799.38" y="708" width="14.84" height="144.4" fill="rgba(180,180,180,0.12)"/>
<rect x="820.58" y="708" width="14.84" height="144.4" fill="rgba(180,180,180,0.12)"/>
<rect x="841.78" y="708" width="14.84" height="144.4" fill="rgba(180,180,180,0.12)"/>
<rect x="862.98" y="708" width="14.84" height="144.4" fill="rgba(180,180,180,0.12)"/>
<line x1="952.2" y1="852.4" x2="1297" y2="852.4" stroke="#4e5054" stroke-width="1" stroke-dasharray="4.8 2.45"/>
<text x="943.5" y="857" text-anchor="end" class="yl">0</text>
<line x1="952.2" y1="827.42" x2="1297" y2="827.42" stroke="#4e5054" stroke-width="1" stroke-dasharray="4.8 2.45"/>
<text x="943.5" y="832.02" text-anchor="end" class="yl">2</text>
<line x1="952.2" y1="802.43" x2="1297" y2="802.43" stroke="#4e5054" stroke-width="1" stroke-dasharray="4.8 2.45"/>
<text x="943.5" y="807.03" text-anchor="end" class="yl">4</text>
<line x1="952.2" y1="777.45" x2="1297" y2="777.45" stroke="#4e5054" stroke-width="1" stroke-dasharray="4.8 2.45"/>
<text x="943.5" y="782.05" text-anchor="end" class="yl">6</text>
<line x1="952.2" y1="752.47" x2="1297" y2="752.47" stroke="#4e5054" stroke-width="1" stroke-dasharray="4.8 2.45"/>
<text x="943.5" y="757.07" text-anchor="end" class="yl">8</text>
<line x1="952.2" y1="727.48" x2="1297" y2="727.48" stroke="#4e5054" stroke-width="1" stroke-dasharray="4.8 2.45"/>
<text x="943.5" y="732.08" text-anchor="end" class="yl">10</text>
<line x1="952.2" y1="702.5" x2="1297" y2="702.5" stroke="#4e5054" stroke-width="1" stroke-dasharray="4.8 2.45"/>
<text x="943.5" y="707.1" text-anchor="end" class="yl">12</text>
<line x1="962.98" y1="852.4" x2="962.98" y2="857.9" stroke="#4e5054" stroke-width="1"/>
<text x="962.98" y="872.9" text-anchor="middle" class="xl">11:34</text>
<text x="963.18" y="886.1" text-anchor="middle" class="xl xd">04–12</text>
<line x1="1027.62" y1="852.4" x2="1027.62" y2="857.9" stroke="#4e5054" stroke-width="1"/>
<text x="1027.62" y="872.9" text-anchor="middle" class="xl">11:37</text>
<text x="1027.83" y="886.1" text-anchor="middle" class="xl xd">04–12</text>
<line x1="1092.28" y1="852.4" x2="1092.28" y2="857.9" stroke="#4e5054" stroke-width="1"/>
<text x="1092.28" y="872.9" text-anchor="middle" class="xl">11:40</text>
<text x="1092.48" y="886.1" text-anchor="middle" class="xl xd">04–12</text>
<line x1="1156.92" y1="852.4" x2="1156.92" y2="857.9" stroke="#4e5054" stroke-width="1"/>
<text x="1156.92" y="872.9" text-anchor="middle" class="xl">11:43</text>
<text x="1157.12" y="886.1" text-anchor="middle" class="xl xd">04–12</text>
<line x1="1221.58" y1="852.4" x2="1221.58" y2="857.9" stroke="#4e5054" stroke-width="1"/>
<text x="1221.58" y="872.9" text-anchor="middle" class="xl">11:46</text>
<text x="1221.78" y="886.1" text-anchor="middle" class="xl xd">04–12</text>
<line x1="1286.22" y1="852.4" x2="1286.22" y2="857.9" stroke="#4e5054" stroke-width="1"/>
<text x="1286.22" y="872.9" text-anchor="middle" class="xl">11:49</text>
<text x="1286.42" y="886.1" text-anchor="middle" class="xl xd">04–12</text>
<polygon points="962.98,852.4 962.98,777.45 984.53,777.45 1006.08,714.99 1027.62,739.98 1049.17,827.42 1070.72,714.99 1092.28,752.47 1113.83,852.4 1135.38,852.4 1156.92,852.4 1178.47,852.4 1200.03,714.99 1221.58,827.42 1243.12,827.42 1264.67,852.4 1286.22,852.4 1286.22,852.4" fill="rgba(124,188,252,0.40)"/>
<polyline points="962.98,777.45 984.53,777.45 1006.08,714.99 1027.62,739.98 1049.17,827.42 1070.72,714.99 1092.28,752.47 1113.83,852.4 1135.38,852.4 1156.92,852.4 1178.47,852.4 1200.03,714.99 1221.58,827.42 1243.12,827.42 1264.67,852.4 1286.22,852.4" fill="none" stroke="#7cbcfc" stroke-width="2.3" stroke-linejoin="round"/>
<circle cx="962.98" cy="777.45" r="2.6" fill="#7cbcfc"/>
<circle cx="984.53" cy="777.45" r="2.6" fill="#7cbcfc"/>
<circle cx="1006.08" cy="714.99" r="2.6" fill="#7cbcfc"/>
<circle cx="1027.62" cy="739.98" r="2.6" fill="#7cbcfc"/>
<circle cx="1049.17" cy="827.42" r="2.6" fill="#7cbcfc"/>
<circle cx="1070.72" cy="714.99" r="2.6" fill="#7cbcfc"/>
<circle cx="1092.28" cy="752.47" r="2.6" fill="#7cbcfc"/>
<circle cx="1113.83" cy="852.4" r="2.6" fill="#7cbcfc"/>
<circle cx="1135.38" cy="852.4" r="2.6" fill="#7cbcfc"/>
<circle cx="1156.92" cy="852.4" r="2.6" fill="#7cbcfc"/>
<circle cx="1178.47" cy="852.4" r="2.6" fill="#7cbcfc"/>
<circle cx="1200.03" cy="714.99" r="2.6" fill="#7cbcfc"/>
<circle cx="1221.58" cy="827.42" r="2.6" fill="#7cbcfc"/>
<circle cx="1243.12" cy="827.42" r="2.6" fill="#7cbcfc"/>
<circle cx="1264.67" cy="852.4" r="2.6" fill="#7cbcfc"/>
<circle cx="1286.22" cy="852.4" r="2.6" fill="#7cbcfc"/>
<line x1="1373.8" y1="852.4" x2="1712" y2="852.4" stroke="#4e5054" stroke-width="1" stroke-dasharray="4.8 2.45"/>
<text x="1364.5" y="857" text-anchor="end" class="yl">0</text>
<line x1="1373.8" y1="822.42" x2="1712" y2="822.42" stroke="#4e5054" stroke-width="1" stroke-dasharray="4.8 2.45"/>
<text x="1364.5" y="827.02" text-anchor="end" class="yl">0.2</text>
<line x1="1373.8" y1="792.44" x2="1712" y2="792.44" stroke="#4e5054" stroke-width="1" stroke-dasharray="4.8 2.45"/>
<text x="1364.5" y="797.04" text-anchor="end" class="yl">0.4</text>
<line x1="1373.8" y1="762.46" x2="1712" y2="762.46" stroke="#4e5054" stroke-width="1" stroke-dasharray="4.8 2.45"/>
<text x="1364.5" y="767.06" text-anchor="end" class="yl">0.6</text>
<line x1="1373.8" y1="732.48" x2="1712" y2="732.48" stroke="#4e5054" stroke-width="1" stroke-dasharray="4.8 2.45"/>
<text x="1364.5" y="737.08" text-anchor="end" class="yl">0.8</text>
<line x1="1373.8" y1="702.5" x2="1712" y2="702.5" stroke="#4e5054" stroke-width="1" stroke-dasharray="4.8 2.45"/>
<text x="1364.5" y="707.1" text-anchor="end" class="yl">1</text>
<line x1="1384.37" y1="852.4" x2="1384.37" y2="857.9" stroke="#4e5054" stroke-width="1"/>
<text x="1384.37" y="872.9" text-anchor="middle" class="xl">11:34</text>
<text x="1384.57" y="886.1" text-anchor="middle" class="xl xd">04–12</text>
<line x1="1447.78" y1="852.4" x2="1447.78" y2="857.9" stroke="#4e5054" stroke-width="1"/>
<text x="1447.78" y="872.9" text-anchor="middle" class="xl">11:37</text>
<text x="1447.98" y="886.1" text-anchor="middle" class="xl xd">04–12</text>
<line x1="1511.19" y1="852.4" x2="1511.19" y2="857.9" stroke="#4e5054" stroke-width="1"/>
<text x="1511.19" y="872.9" text-anchor="middle" class="xl">11:40</text>
<text x="1511.39" y="886.1" text-anchor="middle" class="xl xd">04–12</text>
<line x1="1574.61" y1="852.4" x2="1574.61" y2="857.9" stroke="#4e5054" stroke-width="1"/>
<text x="1574.61" y="872.9" text-anchor="middle" class="xl">11:43</text>
<text x="1574.81" y="886.1" text-anchor="middle" class="xl xd">04–12</text>
<line x1="1638.02" y1="852.4" x2="1638.02" y2="857.9" stroke="#4e5054" stroke-width="1"/>
<text x="1638.02" y="872.9" text-anchor="middle" class="xl">11:46</text>
<text x="1638.22" y="886.1" text-anchor="middle" class="xl xd">04–12</text>
<line x1="1701.43" y1="852.4" x2="1701.43" y2="857.9" stroke="#4e5054" stroke-width="1"/>
<text x="1701.43" y="872.9" text-anchor="middle" class="xl">11:49</text>
<text x="1701.63" y="886.1" text-anchor="middle" class="xl xd">04–12</text>
<polygon points="1384.37,852.4 1384.37,852.4 1405.51,852.4 1426.64,852.4 1447.78,852.4 1468.92,852.4 1490.06,852.4 1511.19,852.4 1532.33,852.4 1553.47,852.4 1574.61,852.4 1595.74,852.4 1616.88,852.4 1638.02,852.4 1659.16,852.4 1680.29,852.4 1701.43,852.4 1701.43,852.4" fill="rgba(124,188,252,0.40)"/>
<polyline points="1384.37,852.4 1405.51,852.4 1426.64,852.4 1447.78,852.4 1468.92,852.4 1490.06,852.4 1511.19,852.4 1532.33,852.4 1553.47,852.4 1574.61,852.4 1595.74,852.4 1616.88,852.4 1638.02,852.4 1659.16,852.4 1680.29,852.4 1701.43,852.4" fill="none" stroke="#7cbcfc" stroke-width="2.3" stroke-linejoin="round"/>
<circle cx="1384.37" cy="852.4" r="2.6" fill="#7cbcfc"/>
<circle cx="1405.51" cy="852.4" r="2.6" fill="#7cbcfc"/>
<circle cx="1426.64" cy="852.4" r="2.6" fill="#7cbcfc"/>
<circle cx="1447.78" cy="852.4" r="2.6" fill="#7cbcfc"/>
<circle cx="1468.92" cy="852.4" r="2.6" fill="#7cbcfc"/>
<circle cx="1490.06" cy="852.4" r="2.6" fill="#7cbcfc"/>
<circle cx="1511.19" cy="852.4" r="2.6" fill="#7cbcfc"/>
<circle cx="1532.33" cy="852.4" r="2.6" fill="#7cbcfc"/>
<circle cx="1553.47" cy="852.4" r="2.6" fill="#7cbcfc"/>
<circle cx="1574.61" cy="852.4" r="2.6" fill="#7cbcfc"/>
<circle cx="1595.74" cy="852.4" r="2.6" fill="#7cbcfc"/>
<circle cx="1616.88" cy="852.4" r="2.6" fill="#7cbcfc"/>
<circle cx="1638.02" cy="852.4" r="2.6" fill="#7cbcfc"/>
<circle cx="1659.16" cy="852.4" r="2.6" fill="#7cbcfc"/>
<circle cx="1680.29" cy="852.4" r="2.6" fill="#7cbcfc"/>
<circle cx="1701.43" cy="852.4" r="2.6" fill="#7cbcfc"/>
<line x1="115.5" y1="1106.2" x2="465" y2="1106.2" stroke="#4e5054" stroke-width="1" stroke-dasharray="4.8 2.45"/>
<text x="106.5" y="1110.8" text-anchor="end" class="yl">0</text>
<line x1="115.5" y1="1076.24" x2="465" y2="1076.24" stroke="#4e5054" stroke-width="1" stroke-dasharray="4.8 2.45"/>
<text x="106.5" y="1080.84" text-anchor="end" class="yl">1</text>
<line x1="115.5" y1="1046.28" x2="465" y2="1046.28" stroke="#4e5054" stroke-width="1" stroke-dasharray="4.8 2.45"/>
<text x="106.5" y="1050.88" text-anchor="end" class="yl">2</text>
<line x1="115.5" y1="1016.32" x2="465" y2="1016.32" stroke="#4e5054" stroke-width="1" stroke-dasharray="4.8 2.45"/>
<text x="106.5" y="1020.92" text-anchor="end" class="yl">3</text>
<line x1="115.5" y1="986.36" x2="465" y2="986.36" stroke="#4e5054" stroke-width="1" stroke-dasharray="4.8 2.45"/>
<text x="106.5" y="990.96" text-anchor="end" class="yl">4</text>
<line x1="115.5" y1="956.4" x2="465" y2="956.4" stroke="#4e5054" stroke-width="1" stroke-dasharray="4.8 2.45"/>
<text x="106.5" y="961" text-anchor="end" class="yl">5</text>
<line x1="126.42" y1="1106.2" x2="126.42" y2="1111.7" stroke="#4e5054" stroke-width="1"/>
<text x="126.42" y="1126.7" text-anchor="middle" class="xl">11:34</text>
<text x="126.62" y="1139.9" text-anchor="middle" class="xl xd">04–12</text>
<line x1="191.95" y1="1106.2" x2="191.95" y2="1111.7" stroke="#4e5054" stroke-width="1"/>
<text x="191.95" y="1126.7" text-anchor="middle" class="xl">11:37</text>
<text x="192.15" y="1139.9" text-anchor="middle" class="xl xd">04–12</text>
<line x1="257.48" y1="1106.2" x2="257.48" y2="1111.7" stroke="#4e5054" stroke-width="1"/>
<text x="257.48" y="1126.7" text-anchor="middle" class="xl">11:40</text>
<text x="257.68" y="1139.9" text-anchor="middle" class="xl xd">04–12</text>
<line x1="323.02" y1="1106.2" x2="323.02" y2="1111.7" stroke="#4e5054" stroke-width="1"/>
<text x="323.02" y="1126.7" text-anchor="middle" class="xl">11:43</text>
<text x="323.22" y="1139.9" text-anchor="middle" class="xl xd">04–12</text>
<line x1="388.55" y1="1106.2" x2="388.55" y2="1111.7" stroke="#4e5054" stroke-width="1"/>
<text x="388.55" y="1126.7" text-anchor="middle" class="xl">11:46</text>
<text x="388.75" y="1139.9" text-anchor="middle" class="xl xd">04–12</text>
<line x1="454.08" y1="1106.2" x2="454.08" y2="1111.7" stroke="#4e5054" stroke-width="1"/>
<text x="454.08" y="1126.7" text-anchor="middle" class="xl">11:49</text>
<text x="454.28" y="1139.9" text-anchor="middle" class="xl xd">04–12</text>
<polygon points="126.42,1106.2 126.42,956.4 148.27,956.4 170.11,956.4 191.95,986.36 213.8,956.4 235.64,986.36 257.48,1076.24 279.33,1106.2 301.17,1106.2 323.02,1106.2 344.86,1076.24 366.7,1076.24 388.55,1076.24 410.39,1076.24 432.23,1076.24 454.08,1106.2 454.08,1106.2" fill="rgba(124,188,252,0.40)"/>
<polyline points="126.42,956.4 148.27,956.4 170.11,956.4 191.95,986.36 213.8,956.4 235.64,986.36 257.48,1076.24 279.33,1106.2 301.17,1106.2 323.02,1106.2 344.86,1076.24 366.7,1076.24 388.55,1076.24 410.39,1076.24 432.23,1076.24 454.08,1106.2" fill="none" stroke="#7cbcfc" stroke-width="2.3" stroke-linejoin="round"/>
<circle cx="126.42" cy="956.4" r="2.6" fill="#7cbcfc"/>
<circle cx="148.27" cy="956.4" r="2.6" fill="#7cbcfc"/>
<circle cx="170.11" cy="956.4" r="2.6" fill="#7cbcfc"/>
<circle cx="191.95" cy="986.36" r="2.6" fill="#7cbcfc"/>
<circle cx="213.8" cy="956.4" r="2.6" fill="#7cbcfc"/>
<circle cx="235.64" cy="986.36" r="2.6" fill="#7cbcfc"/>
<circle cx="257.48" cy="1076.24" r="2.6" fill="#7cbcfc"/>
<circle cx="279.33" cy="1106.2" r="2.6" fill="#7cbcfc"/>
<circle cx="301.17" cy="1106.2" r="2.6" fill="#7cbcfc"/>
<circle cx="323.02" cy="1106.2" r="2.6" fill="#7cbcfc"/>
<circle cx="344.86" cy="1076.24" r="2.6" fill="#7cbcfc"/>
<circle cx="366.7" cy="1076.24" r="2.6" fill="#7cbcfc"/>
<circle cx="388.55" cy="1076.24" r="2.6" fill="#7cbcfc"/>
<circle cx="410.39" cy="1076.24" r="2.6" fill="#7cbcfc"/>
<circle cx="432.23" cy="1076.24" r="2.6" fill="#7cbcfc"/>
<circle cx="454.08" cy="1106.2" r="2.6" fill="#7cbcfc"/>
<line x1="530.6" y1="1106.2" x2="881" y2="1106.2" stroke="#4e5054" stroke-width="1" stroke-dasharray="4.8 2.45"/>
<text x="522" y="1110.8" text-anchor="end" class="yl">0</text>
<line x1="530.6" y1="1068.75" x2="881" y2="1068.75" stroke="#4e5054" stroke-width="1" stroke-dasharray="4.8 2.45"/>
<text x="522" y="1073.35" text-anchor="end" class="yl">1</text>
<line x1="530.6" y1="1031.3" x2="881" y2="1031.3" stroke="#4e5054" stroke-width="1" stroke-dasharray="4.8 2.45"/>
<text x="522" y="1035.9" text-anchor="end" class="yl">2</text>
<line x1="530.6" y1="993.85" x2="881" y2="993.85" stroke="#4e5054" stroke-width="1" stroke-dasharray="4.8 2.45"/>
<text x="522" y="998.45" text-anchor="end" class="yl">3</text>
<line x1="530.6" y1="956.4" x2="881" y2="956.4" stroke="#4e5054" stroke-width="1" stroke-dasharray="4.8 2.45"/>
<text x="522" y="961" text-anchor="end" class="yl">4</text>
<line x1="541.55" y1="1106.2" x2="541.55" y2="1111.7" stroke="#4e5054" stroke-width="1"/>
<text x="541.55" y="1126.7" text-anchor="middle" class="xl">11:34</text>
<text x="541.75" y="1139.9" text-anchor="middle" class="xl xd">04–12</text>
<line x1="607.25" y1="1106.2" x2="607.25" y2="1111.7" stroke="#4e5054" stroke-width="1"/>
<text x="607.25" y="1126.7" text-anchor="middle" class="xl">11:37</text>
<text x="607.45" y="1139.9" text-anchor="middle" class="xl xd">04–12</text>
<line x1="672.95" y1="1106.2" x2="672.95" y2="1111.7" stroke="#4e5054" stroke-width="1"/>
<text x="672.95" y="1126.7" text-anchor="middle" class="xl">11:40</text>
<text x="673.15" y="1139.9" text-anchor="middle" class="xl xd">04–12</text>
<line x1="738.65" y1="1106.2" x2="738.65" y2="1111.7" stroke="#4e5054" stroke-width="1"/>
<text x="738.65" y="1126.7" text-anchor="middle" class="xl">11:43</text>
<text x="738.85" y="1139.9" text-anchor="middle" class="xl xd">04–12</text>
<line x1="804.35" y1="1106.2" x2="804.35" y2="1111.7" stroke="#4e5054" stroke-width="1"/>
<text x="804.35" y="1126.7" text-anchor="middle" class="xl">11:46</text>
<text x="804.55" y="1139.9" text-anchor="middle" class="xl xd">04–12</text>
<line x1="870.05" y1="1106.2" x2="870.05" y2="1111.7" stroke="#4e5054" stroke-width="1"/>
<text x="870.05" y="1126.7" text-anchor="middle" class="xl">11:49</text>
<text x="870.25" y="1139.9" text-anchor="middle" class="xl xd">04–12</text>
<polygon points="541.55,1106.2 541.55,1068.75 563.45,1068.75 585.35,1068.75 607.25,1068.75 629.15,1068.75 651.05,1068.75 672.95,1068.75 694.85,1106.2 716.75,1106.2 738.65,1106.2 760.55,1068.75 782.45,993.85 804.35,956.4 826.25,1031.3 848.15,1106.2 870.05,1106.2 870.05,1106.2" fill="rgba(124,188,252,0.40)"/>
<polyline points="541.55,1068.75 563.45,1068.75 585.35,1068.75 607.25,1068.75 629.15,1068.75 651.05,1068.75 672.95,1068.75 694.85,1106.2 716.75,1106.2 738.65,1106.2 760.55,1068.75 782.45,993.85 804.35,956.4 826.25,1031.3 848.15,1106.2 870.05,1106.2" fill="none" stroke="#7cbcfc" stroke-width="2.3" stroke-linejoin="round"/>
<circle cx="541.55" cy="1068.75" r="2.6" fill="#7cbcfc"/>
<circle cx="563.45" cy="1068.75" r="2.6" fill="#7cbcfc"/>
<circle cx="585.35" cy="1068.75" r="2.6" fill="#7cbcfc"/>
<circle cx="607.25" cy="1068.75" r="2.6" fill="#7cbcfc"/>
<circle cx="629.15" cy="1068.75" r="2.6" fill="#7cbcfc"/>
<circle cx="651.05" cy="1068.75" r="2.6" fill="#7cbcfc"/>
<circle cx="672.95" cy="1068.75" r="2.6" fill="#7cbcfc"/>
<circle cx="694.85" cy="1106.2" r="2.6" fill="#7cbcfc"/>
<circle cx="716.75" cy="1106.2" r="2.6" fill="#7cbcfc"/>
<circle cx="738.65" cy="1106.2" r="2.6" fill="#7cbcfc"/>
<circle cx="760.55" cy="1068.75" r="2.6" fill="#7cbcfc"/>
<circle cx="782.45" cy="993.85" r="2.6" fill="#7cbcfc"/>
<circle cx="804.35" cy="956.4" r="2.6" fill="#7cbcfc"/>
<circle cx="826.25" cy="1031.3" r="2.6" fill="#7cbcfc"/>
<circle cx="848.15" cy="1106.2" r="2.6" fill="#7cbcfc"/>
<circle cx="870.05" cy="1106.2" r="2.6" fill="#7cbcfc"/>
<line x1="960.3" y1="1106.2" x2="1297" y2="1106.2" stroke="#4e5054" stroke-width="1" stroke-dasharray="4.8 2.45"/>
<text x="951" y="1110.8" text-anchor="end" class="yl">0</text>
<line x1="960.3" y1="1076.24" x2="1297" y2="1076.24" stroke="#4e5054" stroke-width="1" stroke-dasharray="4.8 2.45"/>
<text x="951" y="1080.84" text-anchor="end" class="yl">20</text>
<line x1="960.3" y1="1046.28" x2="1297" y2="1046.28" stroke="#4e5054" stroke-width="1" stroke-dasharray="4.8 2.45"/>
<text x="951" y="1050.88" text-anchor="end" class="yl">40</text>
<line x1="960.3" y1="1016.32" x2="1297" y2="1016.32" stroke="#4e5054" stroke-width="1" stroke-dasharray="4.8 2.45"/>
<text x="951" y="1020.92" text-anchor="end" class="yl">60</text>
<line x1="960.3" y1="986.36" x2="1297" y2="986.36" stroke="#4e5054" stroke-width="1" stroke-dasharray="4.8 2.45"/>
<text x="951" y="990.96" text-anchor="end" class="yl">80</text>
<line x1="960.3" y1="956.4" x2="1297" y2="956.4" stroke="#4e5054" stroke-width="1" stroke-dasharray="4.8 2.45"/>
<text x="951" y="961" text-anchor="end" class="yl">100</text>
<line x1="970.82" y1="1106.2" x2="970.82" y2="1111.7" stroke="#4e5054" stroke-width="1"/>
<text x="970.82" y="1126.7" text-anchor="middle" class="xl">11:34</text>
<text x="971.02" y="1139.9" text-anchor="middle" class="xl xd">04–12</text>
<line x1="1033.95" y1="1106.2" x2="1033.95" y2="1111.7" stroke="#4e5054" stroke-width="1"/>
<text x="1033.95" y="1126.7" text-anchor="middle" class="xl">11:37</text>
<text x="1034.15" y="1139.9" text-anchor="middle" class="xl xd">04–12</text>
<line x1="1097.08" y1="1106.2" x2="1097.08" y2="1111.7" stroke="#4e5054" stroke-width="1"/>
<text x="1097.08" y="1126.7" text-anchor="middle" class="xl">11:40</text>
<text x="1097.28" y="1139.9" text-anchor="middle" class="xl xd">04–12</text>
<line x1="1160.22" y1="1106.2" x2="1160.22" y2="1111.7" stroke="#4e5054" stroke-width="1"/>
<text x="1160.22" y="1126.7" text-anchor="middle" class="xl">11:43</text>
<text x="1160.42" y="1139.9" text-anchor="middle" class="xl xd">04–12</text>
<line x1="1223.35" y1="1106.2" x2="1223.35" y2="1111.7" stroke="#4e5054" stroke-width="1"/>
<text x="1223.35" y="1126.7" text-anchor="middle" class="xl">11:46</text>
<text x="1223.55" y="1139.9" text-anchor="middle" class="xl xd">04–12</text>
<line x1="1286.48" y1="1106.2" x2="1286.48" y2="1111.7" stroke="#4e5054" stroke-width="1"/>
<text x="1286.48" y="1126.7" text-anchor="middle" class="xl">11:49</text>
<text x="1286.68" y="1139.9" text-anchor="middle" class="xl xd">04–12</text>
<polygon points="970.82,1106.2 970.82,987.41 991.87,986.21 1012.91,972.43 1033.95,986.21 1055,964.94 1076.04,981.42 1097.08,1090.47 1118.13,1106.2 1139.17,1106.2 1160.22,1106.2 1181.26,1077.29 1202.3,961.79 1223.35,1053.47 1244.39,1098.26 1265.43,1106.2 1286.48,1106.2 1286.48,1106.2" fill="rgba(124,188,252,0.40)"/>
<polyline points="970.82,987.41 991.87,986.21 1012.91,972.43 1033.95,986.21 1055,964.94 1076.04,981.42 1097.08,1090.47 1118.13,1106.2 1139.17,1106.2 1160.22,1106.2 1181.26,1077.29 1202.3,961.79 1223.35,1053.47 1244.39,1098.26 1265.43,1106.2 1286.48,1106.2" fill="none" stroke="#7cbcfc" stroke-width="2.3" stroke-linejoin="round"/>
<circle cx="970.82" cy="987.41" r="2.6" fill="#7cbcfc"/>
<circle cx="991.87" cy="986.21" r="2.6" fill="#7cbcfc"/>
<circle cx="1012.91" cy="972.43" r="2.6" fill="#7cbcfc"/>
<circle cx="1033.95" cy="986.21" r="2.6" fill="#7cbcfc"/>
<circle cx="1055" cy="964.94" r="2.6" fill="#7cbcfc"/>
<circle cx="1076.04" cy="981.42" r="2.6" fill="#7cbcfc"/>
<circle cx="1097.08" cy="1090.47" r="2.6" fill="#7cbcfc"/>
<circle cx="1118.13" cy="1106.2" r="2.6" fill="#7cbcfc"/>
<circle cx="1139.17" cy="1106.2" r="2.6" fill="#7cbcfc"/>
<circle cx="1160.22" cy="1106.2" r="2.6" fill="#7cbcfc"/>
<circle cx="1181.26" cy="1077.29" r="2.6" fill="#7cbcfc"/>
<circle cx="1202.3" cy="961.79" r="2.6" fill="#7cbcfc"/>
<circle cx="1223.35" cy="1053.47" r="2.6" fill="#7cbcfc"/>
<circle cx="1244.39" cy="1098.26" r="2.6" fill="#7cbcfc"/>
<circle cx="1265.43" cy="1106.2" r="2.6" fill="#7cbcfc"/>
<circle cx="1286.48" cy="1106.2" r="2.6" fill="#7cbcfc"/>
<line x1="1373.8" y1="1106.2" x2="1712" y2="1106.2" stroke="#4e5054" stroke-width="1" stroke-dasharray="4.8 2.45"/>
<text x="1364.5" y="1110.8" text-anchor="end" class="yl">0</text>
<line x1="1373.8" y1="1076.24" x2="1712" y2="1076.24" stroke="#4e5054" stroke-width="1" stroke-dasharray="4.8 2.45"/>
<text x="1364.5" y="1080.84" text-anchor="end" class="yl">0.2</text>
<line x1="1373.8" y1="1046.28" x2="1712" y2="1046.28" stroke="#4e5054" stroke-width="1" stroke-dasharray="4.8 2.45"/>
<text x="1364.5" y="1050.88" text-anchor="end" class="yl">0.4</text>
<line x1="1373.8" y1="1016.32" x2="1712" y2="1016.32" stroke="#4e5054" stroke-width="1" stroke-dasharray="4.8 2.45"/>
<text x="1364.5" y="1020.92" text-anchor="end" class="yl">0.6</text>
<line x1="1373.8" y1="986.36" x2="1712" y2="986.36" stroke="#4e5054" stroke-width="1" stroke-dasharray="4.8 2.45"/>
<text x="1364.5" y="990.96" text-anchor="end" class="yl">0.8</text>
<line x1="1373.8" y1="956.4" x2="1712" y2="956.4" stroke="#4e5054" stroke-width="1" stroke-dasharray="4.8 2.45"/>
<text x="1364.5" y="961" text-anchor="end" class="yl">1</text>
<line x1="1384.37" y1="1106.2" x2="1384.37" y2="1111.7" stroke="#4e5054" stroke-width="1"/>
<text x="1384.37" y="1126.7" text-anchor="middle" class="xl">11:34</text>
<text x="1384.57" y="1139.9" text-anchor="middle" class="xl xd">04–12</text>
<line x1="1447.78" y1="1106.2" x2="1447.78" y2="1111.7" stroke="#4e5054" stroke-width="1"/>
<text x="1447.78" y="1126.7" text-anchor="middle" class="xl">11:37</text>
<text x="1447.98" y="1139.9" text-anchor="middle" class="xl xd">04–12</text>
<line x1="1511.19" y1="1106.2" x2="1511.19" y2="1111.7" stroke="#4e5054" stroke-width="1"/>
<text x="1511.19" y="1126.7" text-anchor="middle" class="xl">11:40</text>
<text x="1511.39" y="1139.9" text-anchor="middle" class="xl xd">04–12</text>
<line x1="1574.61" y1="1106.2" x2="1574.61" y2="1111.7" stroke="#4e5054" stroke-width="1"/>
<text x="1574.61" y="1126.7" text-anchor="middle" class="xl">11:43</text>
<text x="1574.81" y="1139.9" text-anchor="middle" class="xl xd">04–12</text>
<line x1="1638.02" y1="1106.2" x2="1638.02" y2="1111.7" stroke="#4e5054" stroke-width="1"/>
<text x="1638.02" y="1126.7" text-anchor="middle" class="xl">11:46</text>
<text x="1638.22" y="1139.9" text-anchor="middle" class="xl xd">04–12</text>
<line x1="1701.43" y1="1106.2" x2="1701.43" y2="1111.7" stroke="#4e5054" stroke-width="1"/>
<text x="1701.43" y="1126.7" text-anchor="middle" class="xl">11:49</text>
<text x="1701.63" y="1139.9" text-anchor="middle" class="xl xd">04–12</text>
<polygon points="1384.37,1106.2 1384.37,1106.2 1405.51,1106.2 1426.64,1106.2 1447.78,1106.2 1468.92,1106.2 1490.06,1106.2 1511.19,1106.2 1532.33,1106.2 1553.47,1106.2 1574.61,1106.2 1595.74,1106.2 1616.88,1106.2 1638.02,1106.2 1659.16,1106.2 1680.29,1106.2 1701.43,1106.2 1701.43,1106.2" fill="rgba(124,188,252,0.40)"/>
<polyline points="1384.37,1106.2 1405.51,1106.2 1426.64,1106.2 1447.78,1106.2 1468.92,1106.2 1490.06,1106.2 1511.19,1106.2 1532.33,1106.2 1553.47,1106.2 1574.61,1106.2 1595.74,1106.2 1616.88,1106.2 1638.02,1106.2 1659.16,1106.2 1680.29,1106.2 1701.43,1106.2" fill="none" stroke="#7cbcfc" stroke-width="2.3" stroke-linejoin="round"/>
<circle cx="1384.37" cy="1106.2" r="2.6" fill="#7cbcfc"/>
<circle cx="1405.51" cy="1106.2" r="2.6" fill="#7cbcfc"/>
<circle cx="1426.64" cy="1106.2" r="2.6" fill="#7cbcfc"/>
<circle cx="1447.78" cy="1106.2" r="2.6" fill="#7cbcfc"/>
<circle cx="1468.92" cy="1106.2" r="2.6" fill="#7cbcfc"/>
<circle cx="1490.06" cy="1106.2" r="2.6" fill="#7cbcfc"/>
<circle cx="1511.19" cy="1106.2" r="2.6" fill="#7cbcfc"/>
<circle cx="1532.33" cy="1106.2" r="2.6" fill="#7cbcfc"/>
<circle cx="1553.47" cy="1106.2" r="2.6" fill="#7cbcfc"/>
<circle cx="1574.61" cy="1106.2" r="2.6" fill="#7cbcfc"/>
<circle cx="1595.74" cy="1106.2" r="2.6" fill="#7cbcfc"/>
<circle cx="1616.88" cy="1106.2" r="2.6" fill="#7cbcfc"/>
<circle cx="1638.02" cy="1106.2" r="2.6" fill="#7cbcfc"/>
<circle cx="1659.16" cy="1106.2" r="2.6" fill="#7cbcfc"/>
<circle cx="1680.29" cy="1106.2" r="2.6" fill="#7cbcfc"/>
<circle cx="1701.43" cy="1106.2" r="2.6" fill="#7cbcfc"/>
<line x1="123.6" y1="1394.4" x2="882" y2="1394.4" stroke="#4e5054" stroke-width="1" stroke-dasharray="4.8 2.45"/>
<text x="114" y="1399" text-anchor="end" class="yl">0</text>
<line x1="123.6" y1="1359.64" x2="882" y2="1359.64" stroke="#4e5054" stroke-width="1" stroke-dasharray="4.8 2.45"/>
<text x="114" y="1364.24" text-anchor="end" class="yl">5</text>
<line x1="123.6" y1="1324.88" x2="882" y2="1324.88" stroke="#4e5054" stroke-width="1" stroke-dasharray="4.8 2.45"/>
<text x="114" y="1329.48" text-anchor="end" class="yl">10</text>
<line x1="123.6" y1="1290.12" x2="882" y2="1290.12" stroke="#4e5054" stroke-width="1" stroke-dasharray="4.8 2.45"/>
<text x="114" y="1294.72" text-anchor="end" class="yl">15</text>
<line x1="123.6" y1="1255.36" x2="882" y2="1255.36" stroke="#4e5054" stroke-width="1" stroke-dasharray="4.8 2.45"/>
<text x="114" y="1259.96" text-anchor="end" class="yl">20</text>
<line x1="123.6" y1="1220.6" x2="882" y2="1220.6" stroke="#4e5054" stroke-width="1" stroke-dasharray="4.8 2.45"/>
<text x="114" y="1225.2" text-anchor="end" class="yl">25</text>
<line x1="147.3" y1="1394.4" x2="147.3" y2="1399.9" stroke="#4e5054" stroke-width="1"/>
<text x="147.3" y="1414.9" text-anchor="middle" class="xl">11:34</text>
<text x="147.5" y="1428.1" text-anchor="middle" class="xl xd">04–12</text>
<line x1="242.1" y1="1394.4" x2="242.1" y2="1399.9" stroke="#4e5054" stroke-width="1"/>
<text x="242.1" y="1414.9" text-anchor="middle" class="xl">11:36</text>
<text x="242.3" y="1428.1" text-anchor="middle" class="xl xd">04–12</text>
<line x1="336.9" y1="1394.4" x2="336.9" y2="1399.9" stroke="#4e5054" stroke-width="1"/>
<text x="336.9" y="1414.9" text-anchor="middle" class="xl">11:38</text>
<text x="337.1" y="1428.1" text-anchor="middle" class="xl xd">04–12</text>
<line x1="431.7" y1="1394.4" x2="431.7" y2="1399.9" stroke="#4e5054" stroke-width="1"/>
<text x="431.7" y="1414.9" text-anchor="middle" class="xl">11:40</text>
<text x="431.9" y="1428.1" text-anchor="middle" class="xl xd">04–12</text>
<line x1="526.5" y1="1394.4" x2="526.5" y2="1399.9" stroke="#4e5054" stroke-width="1"/>
<text x="526.5" y="1414.9" text-anchor="middle" class="xl">11:42</text>
<text x="526.7" y="1428.1" text-anchor="middle" class="xl xd">04–12</text>
<line x1="621.3" y1="1394.4" x2="621.3" y2="1399.9" stroke="#4e5054" stroke-width="1"/>
<text x="621.3" y="1414.9" text-anchor="middle" class="xl">11:44</text>
<text x="621.5" y="1428.1" text-anchor="middle" class="xl xd">04–12</text>
<line x1="716.1" y1="1394.4" x2="716.1" y2="1399.9" stroke="#4e5054" stroke-width="1"/>
<text x="716.1" y="1414.9" text-anchor="middle" class="xl">11:46</text>
<text x="716.3" y="1428.1" text-anchor="middle" class="xl xd">04–12</text>
<line x1="810.9" y1="1394.4" x2="810.9" y2="1399.9" stroke="#4e5054" stroke-width="1"/>
<text x="810.9" y="1414.9" text-anchor="middle" class="xl">11:48</text>
<text x="811.1" y="1428.1" text-anchor="middle" class="xl xd">04–12</text>
<polygon points="147.3,1394.4 147.3,1289.42 194.7,1280.39 242.1,1270.65 289.5,1263.01 336.9,1252.58 384.3,1242.85 431.7,1241.46 479.1,1241.46 526.5,1241.46 573.9,1241.46 621.3,1248.41 668.7,1234.5 716.1,1226.16 763.5,1225.47 810.9,1225.47 858.3,1225.47 858.3,1394.4" fill="rgba(124,188,252,0.40)"/>
<polyline points="147.3,1289.42 194.7,1280.39 242.1,1270.65 289.5,1263.01 336.9,1252.58 384.3,1242.85 431.7,1241.46 479.1,1241.46 526.5,1241.46 573.9,1241.46 621.3,1248.41 668.7,1234.5 716.1,1226.16 763.5,1225.47 810.9,1225.47 858.3,1225.47" fill="none" stroke="#7cbcfc" stroke-width="2.3" stroke-linejoin="round"/>
<circle cx="147.3" cy="1289.42" r="2.6" fill="#7cbcfc"/>
<circle cx="194.7" cy="1280.39" r="2.6" fill="#7cbcfc"/>
<circle cx="242.1" cy="1270.65" r="2.6" fill="#7cbcfc"/>
<circle cx="289.5" cy="1263.01" r="2.6" fill="#7cbcfc"/>
<circle cx="336.9" cy="1252.58" r="2.6" fill="#7cbcfc"/>
<circle cx="384.3" cy="1242.85" r="2.6" fill="#7cbcfc"/>
<circle cx="431.7" cy="1241.46" r="2.6" fill="#7cbcfc"/>
<circle cx="479.1" cy="1241.46" r="2.6" fill="#7cbcfc"/>
<circle cx="526.5" cy="1241.46" r="2.6" fill="#7cbcfc"/>
<circle cx="573.9" cy="1241.46" r="2.6" fill="#7cbcfc"/>
<circle cx="621.3" cy="1248.41" r="2.6" fill="#7cbcfc"/>
<circle cx="668.7" cy="1234.5" r="2.6" fill="#7cbcfc"/>
<circle cx="716.1" cy="1226.16" r="2.6" fill="#7cbcfc"/>
<circle cx="763.5" cy="1225.47" r="2.6" fill="#7cbcfc"/>
<circle cx="810.9" cy="1225.47" r="2.6" fill="#7cbcfc"/>
<circle cx="858.3" cy="1225.47" r="2.6" fill="#7cbcfc"/>
<line x1="971.5" y1="1394.4" x2="1713" y2="1394.4" stroke="#4e5054" stroke-width="1" stroke-dasharray="4.8 2.45"/>
<text x="963" y="1399" text-anchor="end" class="yl">0</text>
<line x1="971.5" y1="1359.64" x2="1713" y2="1359.64" stroke="#4e5054" stroke-width="1" stroke-dasharray="4.8 2.45"/>
<text x="963" y="1364.24" text-anchor="end" class="yl">200</text>
<line x1="971.5" y1="1324.88" x2="1713" y2="1324.88" stroke="#4e5054" stroke-width="1" stroke-dasharray="4.8 2.45"/>
<text x="963" y="1329.48" text-anchor="end" class="yl">400</text>
<line x1="971.5" y1="1290.12" x2="1713" y2="1290.12" stroke="#4e5054" stroke-width="1" stroke-dasharray="4.8 2.45"/>
<text x="963" y="1294.72" text-anchor="end" class="yl">600</text>
<line x1="971.5" y1="1255.36" x2="1713" y2="1255.36" stroke="#4e5054" stroke-width="1" stroke-dasharray="4.8 2.45"/>
<text x="963" y="1259.96" text-anchor="end" class="yl">800</text>
<line x1="971.5" y1="1220.6" x2="1713" y2="1220.6" stroke="#4e5054" stroke-width="1" stroke-dasharray="4.8 2.45"/>
<text x="963" y="1225.2" text-anchor="end" class="yl">1,000</text>
<line x1="994.67" y1="1394.4" x2="994.67" y2="1399.9" stroke="#4e5054" stroke-width="1"/>
<text x="994.67" y="1414.9" text-anchor="middle" class="xl">11:34</text>
<text x="994.87" y="1428.1" text-anchor="middle" class="xl xd">04–12</text>
<line x1="1087.36" y1="1394.4" x2="1087.36" y2="1399.9" stroke="#4e5054" stroke-width="1"/>
<text x="1087.36" y="1414.9" text-anchor="middle" class="xl">11:36</text>
<text x="1087.56" y="1428.1" text-anchor="middle" class="xl xd">04–12</text>
<line x1="1180.05" y1="1394.4" x2="1180.05" y2="1399.9" stroke="#4e5054" stroke-width="1"/>
<text x="1180.05" y="1414.9" text-anchor="middle" class="xl">11:38</text>
<text x="1180.25" y="1428.1" text-anchor="middle" class="xl xd">04–12</text>
<line x1="1272.73" y1="1394.4" x2="1272.73" y2="1399.9" stroke="#4e5054" stroke-width="1"/>
<text x="1272.73" y="1414.9" text-anchor="middle" class="xl">11:40</text>
<text x="1272.93" y="1428.1" text-anchor="middle" class="xl xd">04–12</text>
<line x1="1365.42" y1="1394.4" x2="1365.42" y2="1399.9" stroke="#4e5054" stroke-width="1"/>
<text x="1365.42" y="1414.9" text-anchor="middle" class="xl">11:42</text>
<text x="1365.62" y="1428.1" text-anchor="middle" class="xl xd">04–12</text>
<line x1="1458.11" y1="1394.4" x2="1458.11" y2="1399.9" stroke="#4e5054" stroke-width="1"/>
<text x="1458.11" y="1414.9" text-anchor="middle" class="xl">11:44</text>
<text x="1458.31" y="1428.1" text-anchor="middle" class="xl xd">04–12</text>
<line x1="1550.8" y1="1394.4" x2="1550.8" y2="1399.9" stroke="#4e5054" stroke-width="1"/>
<text x="1550.8" y="1414.9" text-anchor="middle" class="xl">11:46</text>
<text x="1551" y="1428.1" text-anchor="middle" class="xl xd">04–12</text>
<line x1="1643.48" y1="1394.4" x2="1643.48" y2="1399.9" stroke="#4e5054" stroke-width="1"/>
<text x="1643.48" y="1414.9" text-anchor="middle" class="xl">11:48</text>
<text x="1643.68" y="1428.1" text-anchor="middle" class="xl xd">04–12</text>
<polygon points="994.67,1394.4 994.67,1321.4 1041.02,1317.06 1087.36,1310.28 1133.7,1303.85 1180.05,1296.03 1226.39,1289.77 1272.73,1288.56 1319.08,1288.56 1365.42,1288.56 1411.77,1288.56 1458.11,1261.79 1504.45,1234.68 1550.8,1234.68 1597.14,1234.68 1643.48,1234.68 1689.83,1234.68 1689.83,1394.4" fill="rgba(124,188,252,0.40)"/>
<polyline points="994.67,1321.4 1041.02,1317.06 1087.36,1310.28 1133.7,1303.85 1180.05,1296.03 1226.39,1289.77 1272.73,1288.56 1319.08,1288.56 1365.42,1288.56 1411.77,1288.56 1458.11,1261.79 1504.45,1234.68 1550.8,1234.68 1597.14,1234.68 1643.48,1234.68 1689.83,1234.68" fill="none" stroke="#7cbcfc" stroke-width="2.3" stroke-linejoin="round"/>
<circle cx="994.67" cy="1321.4" r="2.6" fill="#7cbcfc"/>
<circle cx="1041.02" cy="1317.06" r="2.6" fill="#7cbcfc"/>
<circle cx="1087.36" cy="1310.28" r="2.6" fill="#7cbcfc"/>
<circle cx="1133.7" cy="1303.85" r="2.6" fill="#7cbcfc"/>
<circle cx="1180.05" cy="1296.03" r="2.6" fill="#7cbcfc"/>
<circle cx="1226.39" cy="1289.77" r="2.6" fill="#7cbcfc"/>
<circle cx="1272.73" cy="1288.56" r="2.6" fill="#7cbcfc"/>
<circle cx="1319.08" cy="1288.56" r="2.6" fill="#7cbcfc"/>
<circle cx="1365.42" cy="1288.56" r="2.6" fill="#7cbcfc"/>
<circle cx="1411.77" cy="1288.56" r="2.6" fill="#7cbcfc"/>
<circle cx="1458.11" cy="1261.79" r="2.6" fill="#7cbcfc"/>
<circle cx="1504.45" cy="1234.68" r="2.6" fill="#7cbcfc"/>
<circle cx="1550.8" cy="1234.68" r="2.6" fill="#7cbcfc"/>
<circle cx="1597.14" cy="1234.68" r="2.6" fill="#7cbcfc"/>
<circle cx="1643.48" cy="1234.68" r="2.6" fill="#7cbcfc"/>
<circle cx="1689.83" cy="1234.68" r="2.6" fill="#7cbcfc"/>
</svg>
<div class="abs" style="left:0;top:1458px;width:1748px;height:18px;overflow:hidden;"><div class="abs" style="left:85px;top:0;height:30px;border-left:1px solid #38393c;border-right:1px solid #38393c;box-sizing:border-box;width:822px;"></div><div class="abs" style="left:917px;top:0;height:30px;border-left:1px solid #38393c;border-right:1px solid #38393c;box-sizing:border-box;width:822px;"></div><svg class="abs" style="left:0;top:0" width="1748" height="18"><text x="147.50" y="6.40" text-anchor="middle" class="xl xd">04–12</text><text x="242.30" y="6.40" text-anchor="middle" class="xl xd">04–12</text><text x="337.10" y="6.40" text-anchor="middle" class="xl xd">04–12</text><text x="431.90" y="6.40" text-anchor="middle" class="xl xd">04–12</text><text x="526.70" y="6.40" text-anchor="middle" class="xl xd">04–12</text><text x="621.50" y="6.40" text-anchor="middle" class="xl xd">04–12</text><text x="716.30" y="6.40" text-anchor="middle" class="xl xd">04–12</text><text x="811.10" y="6.40" text-anchor="middle" class="xl xd">04–12</text><text x="994.87" y="6.40" text-anchor="middle" class="xl xd">04–12</text><text x="1087.56" y="6.40" text-anchor="middle" class="xl xd">04–12</text><text x="1180.25" y="6.40" text-anchor="middle" class="xl xd">04–12</text><text x="1272.93" y="6.40" text-anchor="middle" class="xl xd">04–12</text><text x="1365.62" y="6.40" text-anchor="middle" class="xl xd">04–12</text><text x="1458.31" y="6.40" text-anchor="middle" class="xl xd">04–12</text><text x="1551.00" y="6.40" text-anchor="middle" class="xl xd">04–12</text><text x="1643.68" y="6.40" text-anchor="middle" class="xl xd">04–12</text></svg></div>
</body></html>
